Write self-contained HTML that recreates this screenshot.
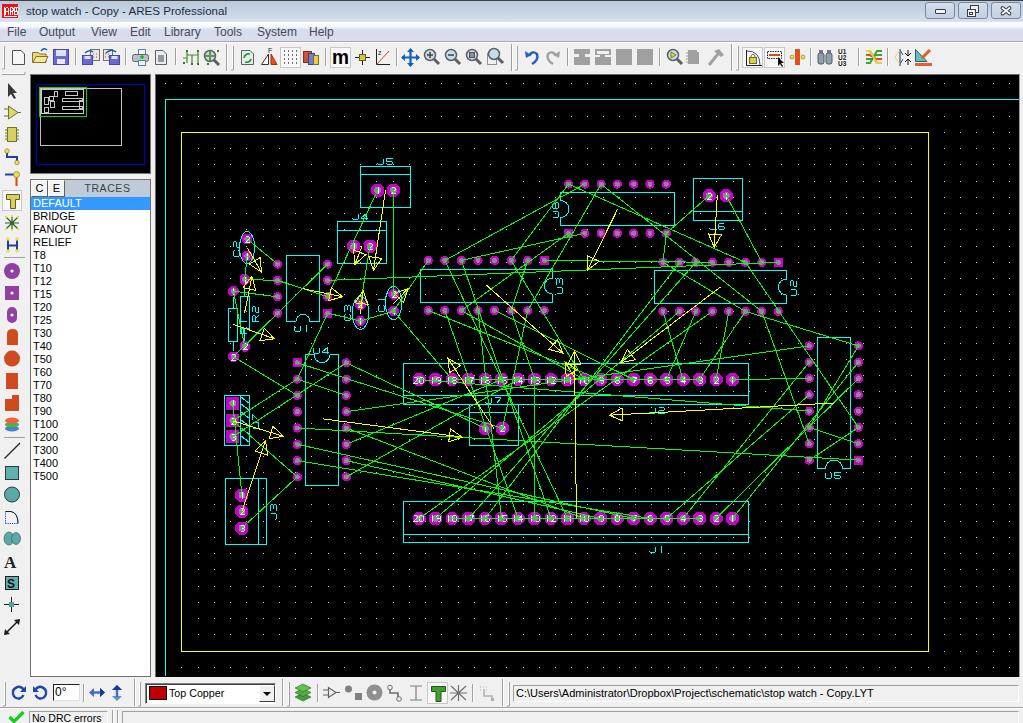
<!DOCTYPE html><html><head><meta charset="utf-8"><style>
*{margin:0;padding:0;box-sizing:border-box}
html,body{width:1023px;height:723px;overflow:hidden;background:#f0f0f0;font-family:"Liberation Sans",sans-serif;position:relative}
.a{position:absolute}
#title{left:0;top:0;width:1023px;height:22px;background:linear-gradient(#b9c9d9,#c6d4e2 45%,#d6e2ee);border-top:1px solid #404040}
#title .t{left:26px;top:3px;font-size:11.6px;color:#1e2b40;white-space:nowrap}
.wb{top:2px;height:17px;border:1px solid #7888a4;border-radius:3px;background:linear-gradient(#d4deea,#c2d0e0)}
#menu{left:0;top:22px;width:1023px;height:19px;background:linear-gradient(#ffffff 0,#f4f6fb 25%,#d8dcee 42%,#dadfef 100%)}
#menu span{position:absolute;top:3px;font-size:12px;color:#4a4a5a}
#list{left:30px;top:179px;width:121px;height:498px;background:#fff;border:1px solid #707070}
#list div.r{position:absolute;left:2px;font-size:11px;color:#000;height:13px;line-height:13px}
.sunk{border:1px solid;border-color:#a0a0a0 #fff #fff #a0a0a0}
</style></head><body>
<div id="title" class="a">
<svg class="a" style="left:2px;top:3px" width="17" height="15" shape-rendering="crispEdges"><rect x="0" y="0" width="16" height="14" fill="#f01010"/><path d="M2.5 3V12.5H15M3.5 10.5V4.5L4.5 3.5H5.5L6.5 4.5V10.5M3.5 7.5H6.5M8.5 10.5V3.5H10.5L11 4.5V6.5L10.5 7.5H8.5M10 7.5L11 10.5M13.5 3.5H12V10.5H13.5M12 7.5H13.5M15.5 3.5H14.5V7.5H15.5V10.5H14" fill="none" stroke="#fff" stroke-width="1"/></svg>
<div class="a t">stop watch - Copy - ARES Professional</div>
</div>
<div class="a wb" style="left:925px;width:30px"></div>
<div class="a wb" style="left:958px;width:30px"></div>
<div class="a wb" style="left:991px;width:30px"></div>
<div class="a" style="left:935px;top:9px;width:11px;height:5px;background:#f4f4f4;border:1px solid #3c3c4c;border-radius:1px"></div>
<div class="a" style="left:970px;top:5px;width:9px;height:8px;border:1px solid #3c3c4c;background:#f0f0f0"></div><div class="a" style="left:967px;top:9px;width:9px;height:8px;border:1px solid #3c3c4c;background:#f0f0f0"></div><div class="a" style="left:969px;top:12px;width:4px;height:3px;border:1px solid #3c3c4c"></div>
<svg class="a" style="left:998px;top:4px" width="16" height="14"><path d="M4.5 4L11.5 9.5M11.5 4L4.5 9.5" stroke="#3c3c4c" stroke-width="3.8" stroke-linecap="round"/><path d="M4.5 4L11.5 9.5M11.5 4L4.5 9.5" stroke="#f4f4f4" stroke-width="1.8" stroke-linecap="round"/></svg>
<div id="menu" class="a">
<span style="left:7px">File</span>
<span style="left:39px">Output</span>
<span style="left:91px">View</span>
<span style="left:130px">Edit</span>
<span style="left:164px">Library</span>
<span style="left:214px">Tools</span>
<span style="left:257px">System</span>
<span style="left:309px">Help</span>
</div>
<div class="a" style="left:0;top:41px;width:1023px;height:1px;background:#a8a8b0"></div><div class="a" style="left:0;top:42px;width:1023px;height:1px;background:#fff"></div>
<div class="a" style="left:30px;top:74px;width:121px;height:100px;background:#000;border:1px solid #777"></div>
<div class="a" style="left:36px;top:84px;width:109px;height:81px;border:1px solid #0000d0"></div>
<div class="a" style="left:40px;top:88px;width:82px;height:58px;border:1px solid #c0c0c0"></div>
<div class="a" style="left:39px;top:87px;width:48px;height:30px;border:1px solid #00e000"></div>
<svg class="a" style="left:40px;top:88px" width="46" height="28" shape-rendering="crispEdges"><g fill="none" stroke="#c8c8c8"><rect x="1.5" y="1.5" width="42" height="24"/><rect x="4.5" y="9.5" width="4" height="7"/><rect x="9.5" y="8.5" width="4" height="4"/><rect x="14.5" y="3.5" width="3" height="5"/><rect x="25.5" y="3.5" width="12" height="4"/><rect x="22.5" y="10.5" width="20" height="3"/><rect x="10.5" y="13.5" width="4" height="6"/><rect x="22.5" y="18.5" width="20" height="3"/><rect x="4.5" y="19.5" width="4" height="5"/><rect x="39.5" y="12.5" width="4" height="8"/></g></svg>
<div id="list" class="a">
<div class="a" style="left:0;top:0;width:17px;height:17px;background:#f4f4f4;border:1px solid;border-color:#fff #606060 #606060 #fff;font-size:11px;line-height:15px;text-align:center">C</div>
<div class="a" style="left:17px;top:0;width:17px;height:17px;background:#f4f4f4;border:1px solid;border-color:#fff #606060 #606060 #fff;font-size:11px;line-height:15px;text-align:center">E</div>
<div class="a" style="left:34px;top:0;width:85px;height:17px;background:#bfcbd9;font-size:10.5px;line-height:16px;text-align:center;color:#404040;letter-spacing:0.6px">TRACES</div>
<div class="a" style="left:0;top:17px;width:119px;height:13px;background:#3399ff"></div>
<div class="r" style="top:17px;color:#fff">DEFAULT</div>
<div class="r" style="top:30px;color:#000">BRIDGE</div>
<div class="r" style="top:43px;color:#000">FANOUT</div>
<div class="r" style="top:56px;color:#000">RELIEF</div>
<div class="r" style="top:69px;color:#000">T8</div>
<div class="r" style="top:82px;color:#000">T10</div>
<div class="r" style="top:95px;color:#000">T12</div>
<div class="r" style="top:108px;color:#000">T15</div>
<div class="r" style="top:121px;color:#000">T20</div>
<div class="r" style="top:134px;color:#000">T25</div>
<div class="r" style="top:147px;color:#000">T30</div>
<div class="r" style="top:160px;color:#000">T40</div>
<div class="r" style="top:173px;color:#000">T50</div>
<div class="r" style="top:186px;color:#000">T60</div>
<div class="r" style="top:199px;color:#000">T70</div>
<div class="r" style="top:212px;color:#000">T80</div>
<div class="r" style="top:225px;color:#000">T90</div>
<div class="r" style="top:238px;color:#000">T100</div>
<div class="r" style="top:251px;color:#000">T200</div>
<div class="r" style="top:264px;color:#000">T300</div>
<div class="r" style="top:277px;color:#000">T400</div>
<div class="r" style="top:290px;color:#000">T500</div>
</div>
<div class="a" style="left:155px;top:74px;width:865px;height:603px;background:#000;border-left:1px solid #6a6a6a;border-top:1px solid #6a6a6a;border-right:1px solid #a0a0a0"></div>
<svg class="a" style="left:0;top:0" width="1023" height="723" viewBox="0 0 1023 723" shape-rendering="crispEdges">
<path fill="#d0d0d0" d="M165 83h1v1h-1zm16 0h1v1h-1zm17 0h1v1h-1zm16 0h1v1h-1zm16 0h1v1h-1zm16 0h1v1h-1zm17 0h1v1h-1zm16 0h1v1h-1zm16 0h1v1h-1zm16 0h1v1h-1zm17 0h1v1h-1zm16 0h1v1h-1zm16 0h1v1h-1zm16 0h1v1h-1zm17 0h1v1h-1zm16 0h1v1h-1zm16 0h1v1h-1zm16 0h1v1h-1zm17 0h1v1h-1zm16 0h1v1h-1zm16 0h1v1h-1zm16 0h1v1h-1zm17 0h1v1h-1zm16 0h1v1h-1zm16 0h1v1h-1zm16 0h1v1h-1zm16 0h1v1h-1zm16 0h1v1h-1zm16 0h1v1h-1zm16 0h1v1h-1zm16 0h1v1h-1zm17 0h1v1h-1zm16 0h1v1h-1zm16 0h1v1h-1zm16 0h1v1h-1zm17 0h1v1h-1zm16 0h1v1h-1zm16 0h1v1h-1zm16 0h1v1h-1zm17 0h1v1h-1zm16 0h1v1h-1zm16 0h1v1h-1zm16 0h1v1h-1zm17 0h1v1h-1zm16 0h1v1h-1zm16 0h1v1h-1zm16 0h1v1h-1zm17 0h1v1h-1zm16 0h1v1h-1zm16 0h1v1h-1zm16 0h1v1h-1zm17 0h1v1h-1zm16 0h1v1h-1zM165 99h1v1h-1zm16 0h1v1h-1zm17 0h1v1h-1zm16 0h1v1h-1zm16 0h1v1h-1zm16 0h1v1h-1zm17 0h1v1h-1zm16 0h1v1h-1zm16 0h1v1h-1zm16 0h1v1h-1zm17 0h1v1h-1zm16 0h1v1h-1zm16 0h1v1h-1zm16 0h1v1h-1zm17 0h1v1h-1zm16 0h1v1h-1zm16 0h1v1h-1zm16 0h1v1h-1zm17 0h1v1h-1zm16 0h1v1h-1zm16 0h1v1h-1zm16 0h1v1h-1zm17 0h1v1h-1zm16 0h1v1h-1zm16 0h1v1h-1zm16 0h1v1h-1zm16 0h1v1h-1zm16 0h1v1h-1zm16 0h1v1h-1zm16 0h1v1h-1zm16 0h1v1h-1zm17 0h1v1h-1zm16 0h1v1h-1zm16 0h1v1h-1zm16 0h1v1h-1zm17 0h1v1h-1zm16 0h1v1h-1zm16 0h1v1h-1zm16 0h1v1h-1zm17 0h1v1h-1zm16 0h1v1h-1zm16 0h1v1h-1zm16 0h1v1h-1zm17 0h1v1h-1zm16 0h1v1h-1zm16 0h1v1h-1zm16 0h1v1h-1zm17 0h1v1h-1zm16 0h1v1h-1zm16 0h1v1h-1zm16 0h1v1h-1zm17 0h1v1h-1zm16 0h1v1h-1zM165 116h1v1h-1zm16 0h1v1h-1zm17 0h1v1h-1zm16 0h1v1h-1zm16 0h1v1h-1zm16 0h1v1h-1zm17 0h1v1h-1zm16 0h1v1h-1zm16 0h1v1h-1zm16 0h1v1h-1zm17 0h1v1h-1zm16 0h1v1h-1zm16 0h1v1h-1zm16 0h1v1h-1zm17 0h1v1h-1zm16 0h1v1h-1zm16 0h1v1h-1zm16 0h1v1h-1zm17 0h1v1h-1zm16 0h1v1h-1zm16 0h1v1h-1zm16 0h1v1h-1zm17 0h1v1h-1zm16 0h1v1h-1zm16 0h1v1h-1zm16 0h1v1h-1zm16 0h1v1h-1zm16 0h1v1h-1zm16 0h1v1h-1zm16 0h1v1h-1zm16 0h1v1h-1zm17 0h1v1h-1zm16 0h1v1h-1zm16 0h1v1h-1zm16 0h1v1h-1zm17 0h1v1h-1zm16 0h1v1h-1zm16 0h1v1h-1zm16 0h1v1h-1zm17 0h1v1h-1zm16 0h1v1h-1zm16 0h1v1h-1zm16 0h1v1h-1zm17 0h1v1h-1zm16 0h1v1h-1zm16 0h1v1h-1zm16 0h1v1h-1zm17 0h1v1h-1zm16 0h1v1h-1zm16 0h1v1h-1zm16 0h1v1h-1zm17 0h1v1h-1zm16 0h1v1h-1zM165 132h1v1h-1zm16 0h1v1h-1zm17 0h1v1h-1zm16 0h1v1h-1zm16 0h1v1h-1zm16 0h1v1h-1zm17 0h1v1h-1zm16 0h1v1h-1zm16 0h1v1h-1zm16 0h1v1h-1zm17 0h1v1h-1zm16 0h1v1h-1zm16 0h1v1h-1zm16 0h1v1h-1zm17 0h1v1h-1zm16 0h1v1h-1zm16 0h1v1h-1zm16 0h1v1h-1zm17 0h1v1h-1zm16 0h1v1h-1zm16 0h1v1h-1zm16 0h1v1h-1zm17 0h1v1h-1zm16 0h1v1h-1zm16 0h1v1h-1zm16 0h1v1h-1zm16 0h1v1h-1zm16 0h1v1h-1zm16 0h1v1h-1zm16 0h1v1h-1zm16 0h1v1h-1zm17 0h1v1h-1zm16 0h1v1h-1zm16 0h1v1h-1zm16 0h1v1h-1zm17 0h1v1h-1zm16 0h1v1h-1zm16 0h1v1h-1zm16 0h1v1h-1zm17 0h1v1h-1zm16 0h1v1h-1zm16 0h1v1h-1zm16 0h1v1h-1zm17 0h1v1h-1zm16 0h1v1h-1zm16 0h1v1h-1zm16 0h1v1h-1zm17 0h1v1h-1zm16 0h1v1h-1zm16 0h1v1h-1zm16 0h1v1h-1zm17 0h1v1h-1zm16 0h1v1h-1zM165 148h1v1h-1zm16 0h1v1h-1zm17 0h1v1h-1zm16 0h1v1h-1zm16 0h1v1h-1zm16 0h1v1h-1zm17 0h1v1h-1zm16 0h1v1h-1zm16 0h1v1h-1zm16 0h1v1h-1zm17 0h1v1h-1zm16 0h1v1h-1zm16 0h1v1h-1zm16 0h1v1h-1zm17 0h1v1h-1zm16 0h1v1h-1zm16 0h1v1h-1zm16 0h1v1h-1zm17 0h1v1h-1zm16 0h1v1h-1zm16 0h1v1h-1zm16 0h1v1h-1zm17 0h1v1h-1zm16 0h1v1h-1zm16 0h1v1h-1zm16 0h1v1h-1zm16 0h1v1h-1zm16 0h1v1h-1zm16 0h1v1h-1zm16 0h1v1h-1zm16 0h1v1h-1zm17 0h1v1h-1zm16 0h1v1h-1zm16 0h1v1h-1zm16 0h1v1h-1zm17 0h1v1h-1zm16 0h1v1h-1zm16 0h1v1h-1zm16 0h1v1h-1zm17 0h1v1h-1zm16 0h1v1h-1zm16 0h1v1h-1zm16 0h1v1h-1zm17 0h1v1h-1zm16 0h1v1h-1zm16 0h1v1h-1zm16 0h1v1h-1zm17 0h1v1h-1zm16 0h1v1h-1zm16 0h1v1h-1zm16 0h1v1h-1zm17 0h1v1h-1zm16 0h1v1h-1zM165 164h1v1h-1zm16 0h1v1h-1zm17 0h1v1h-1zm16 0h1v1h-1zm16 0h1v1h-1zm16 0h1v1h-1zm17 0h1v1h-1zm16 0h1v1h-1zm16 0h1v1h-1zm16 0h1v1h-1zm17 0h1v1h-1zm16 0h1v1h-1zm16 0h1v1h-1zm16 0h1v1h-1zm17 0h1v1h-1zm16 0h1v1h-1zm16 0h1v1h-1zm16 0h1v1h-1zm17 0h1v1h-1zm16 0h1v1h-1zm16 0h1v1h-1zm16 0h1v1h-1zm17 0h1v1h-1zm16 0h1v1h-1zm16 0h1v1h-1zm16 0h1v1h-1zm16 0h1v1h-1zm16 0h1v1h-1zm16 0h1v1h-1zm16 0h1v1h-1zm16 0h1v1h-1zm17 0h1v1h-1zm16 0h1v1h-1zm16 0h1v1h-1zm16 0h1v1h-1zm17 0h1v1h-1zm16 0h1v1h-1zm16 0h1v1h-1zm16 0h1v1h-1zm17 0h1v1h-1zm16 0h1v1h-1zm16 0h1v1h-1zm16 0h1v1h-1zm17 0h1v1h-1zm16 0h1v1h-1zm16 0h1v1h-1zm16 0h1v1h-1zm17 0h1v1h-1zm16 0h1v1h-1zm16 0h1v1h-1zm16 0h1v1h-1zm17 0h1v1h-1zm16 0h1v1h-1zM165 181h1v1h-1zm16 0h1v1h-1zm17 0h1v1h-1zm16 0h1v1h-1zm16 0h1v1h-1zm16 0h1v1h-1zm17 0h1v1h-1zm16 0h1v1h-1zm16 0h1v1h-1zm16 0h1v1h-1zm17 0h1v1h-1zm16 0h1v1h-1zm16 0h1v1h-1zm16 0h1v1h-1zm17 0h1v1h-1zm16 0h1v1h-1zm16 0h1v1h-1zm16 0h1v1h-1zm17 0h1v1h-1zm16 0h1v1h-1zm16 0h1v1h-1zm16 0h1v1h-1zm17 0h1v1h-1zm16 0h1v1h-1zm16 0h1v1h-1zm16 0h1v1h-1zm16 0h1v1h-1zm16 0h1v1h-1zm16 0h1v1h-1zm16 0h1v1h-1zm16 0h1v1h-1zm17 0h1v1h-1zm16 0h1v1h-1zm16 0h1v1h-1zm16 0h1v1h-1zm17 0h1v1h-1zm16 0h1v1h-1zm16 0h1v1h-1zm16 0h1v1h-1zm17 0h1v1h-1zm16 0h1v1h-1zm16 0h1v1h-1zm16 0h1v1h-1zm17 0h1v1h-1zm16 0h1v1h-1zm16 0h1v1h-1zm16 0h1v1h-1zm17 0h1v1h-1zm16 0h1v1h-1zm16 0h1v1h-1zm16 0h1v1h-1zm17 0h1v1h-1zm16 0h1v1h-1zM165 197h1v1h-1zm16 0h1v1h-1zm17 0h1v1h-1zm16 0h1v1h-1zm16 0h1v1h-1zm16 0h1v1h-1zm17 0h1v1h-1zm16 0h1v1h-1zm16 0h1v1h-1zm16 0h1v1h-1zm17 0h1v1h-1zm16 0h1v1h-1zm16 0h1v1h-1zm16 0h1v1h-1zm17 0h1v1h-1zm16 0h1v1h-1zm16 0h1v1h-1zm16 0h1v1h-1zm17 0h1v1h-1zm16 0h1v1h-1zm16 0h1v1h-1zm16 0h1v1h-1zm17 0h1v1h-1zm16 0h1v1h-1zm16 0h1v1h-1zm16 0h1v1h-1zm16 0h1v1h-1zm16 0h1v1h-1zm16 0h1v1h-1zm16 0h1v1h-1zm16 0h1v1h-1zm17 0h1v1h-1zm16 0h1v1h-1zm16 0h1v1h-1zm16 0h1v1h-1zm17 0h1v1h-1zm16 0h1v1h-1zm16 0h1v1h-1zm16 0h1v1h-1zm17 0h1v1h-1zm16 0h1v1h-1zm16 0h1v1h-1zm16 0h1v1h-1zm17 0h1v1h-1zm16 0h1v1h-1zm16 0h1v1h-1zm16 0h1v1h-1zm17 0h1v1h-1zm16 0h1v1h-1zm16 0h1v1h-1zm16 0h1v1h-1zm17 0h1v1h-1zm16 0h1v1h-1zM165 213h1v1h-1zm16 0h1v1h-1zm17 0h1v1h-1zm16 0h1v1h-1zm16 0h1v1h-1zm16 0h1v1h-1zm17 0h1v1h-1zm16 0h1v1h-1zm16 0h1v1h-1zm16 0h1v1h-1zm17 0h1v1h-1zm16 0h1v1h-1zm16 0h1v1h-1zm16 0h1v1h-1zm17 0h1v1h-1zm16 0h1v1h-1zm16 0h1v1h-1zm16 0h1v1h-1zm17 0h1v1h-1zm16 0h1v1h-1zm16 0h1v1h-1zm16 0h1v1h-1zm17 0h1v1h-1zm16 0h1v1h-1zm16 0h1v1h-1zm16 0h1v1h-1zm16 0h1v1h-1zm16 0h1v1h-1zm16 0h1v1h-1zm16 0h1v1h-1zm16 0h1v1h-1zm17 0h1v1h-1zm16 0h1v1h-1zm16 0h1v1h-1zm16 0h1v1h-1zm17 0h1v1h-1zm16 0h1v1h-1zm16 0h1v1h-1zm16 0h1v1h-1zm17 0h1v1h-1zm16 0h1v1h-1zm16 0h1v1h-1zm16 0h1v1h-1zm17 0h1v1h-1zm16 0h1v1h-1zm16 0h1v1h-1zm16 0h1v1h-1zm17 0h1v1h-1zm16 0h1v1h-1zm16 0h1v1h-1zm16 0h1v1h-1zm17 0h1v1h-1zm16 0h1v1h-1zM165 229h1v1h-1zm16 0h1v1h-1zm17 0h1v1h-1zm16 0h1v1h-1zm16 0h1v1h-1zm16 0h1v1h-1zm17 0h1v1h-1zm16 0h1v1h-1zm16 0h1v1h-1zm16 0h1v1h-1zm17 0h1v1h-1zm16 0h1v1h-1zm16 0h1v1h-1zm16 0h1v1h-1zm17 0h1v1h-1zm16 0h1v1h-1zm16 0h1v1h-1zm16 0h1v1h-1zm17 0h1v1h-1zm16 0h1v1h-1zm16 0h1v1h-1zm16 0h1v1h-1zm17 0h1v1h-1zm16 0h1v1h-1zm16 0h1v1h-1zm16 0h1v1h-1zm16 0h1v1h-1zm16 0h1v1h-1zm16 0h1v1h-1zm16 0h1v1h-1zm16 0h1v1h-1zm17 0h1v1h-1zm16 0h1v1h-1zm16 0h1v1h-1zm16 0h1v1h-1zm17 0h1v1h-1zm16 0h1v1h-1zm16 0h1v1h-1zm16 0h1v1h-1zm17 0h1v1h-1zm16 0h1v1h-1zm16 0h1v1h-1zm16 0h1v1h-1zm17 0h1v1h-1zm16 0h1v1h-1zm16 0h1v1h-1zm16 0h1v1h-1zm17 0h1v1h-1zm16 0h1v1h-1zm16 0h1v1h-1zm16 0h1v1h-1zm17 0h1v1h-1zm16 0h1v1h-1zM165 246h1v1h-1zm16 0h1v1h-1zm17 0h1v1h-1zm16 0h1v1h-1zm16 0h1v1h-1zm16 0h1v1h-1zm17 0h1v1h-1zm16 0h1v1h-1zm16 0h1v1h-1zm16 0h1v1h-1zm17 0h1v1h-1zm16 0h1v1h-1zm16 0h1v1h-1zm16 0h1v1h-1zm17 0h1v1h-1zm16 0h1v1h-1zm16 0h1v1h-1zm16 0h1v1h-1zm17 0h1v1h-1zm16 0h1v1h-1zm16 0h1v1h-1zm16 0h1v1h-1zm17 0h1v1h-1zm16 0h1v1h-1zm16 0h1v1h-1zm16 0h1v1h-1zm16 0h1v1h-1zm16 0h1v1h-1zm16 0h1v1h-1zm16 0h1v1h-1zm16 0h1v1h-1zm17 0h1v1h-1zm16 0h1v1h-1zm16 0h1v1h-1zm16 0h1v1h-1zm17 0h1v1h-1zm16 0h1v1h-1zm16 0h1v1h-1zm16 0h1v1h-1zm17 0h1v1h-1zm16 0h1v1h-1zm16 0h1v1h-1zm16 0h1v1h-1zm17 0h1v1h-1zm16 0h1v1h-1zm16 0h1v1h-1zm16 0h1v1h-1zm17 0h1v1h-1zm16 0h1v1h-1zm16 0h1v1h-1zm16 0h1v1h-1zm17 0h1v1h-1zm16 0h1v1h-1zM165 262h1v1h-1zm16 0h1v1h-1zm17 0h1v1h-1zm16 0h1v1h-1zm16 0h1v1h-1zm16 0h1v1h-1zm17 0h1v1h-1zm16 0h1v1h-1zm16 0h1v1h-1zm16 0h1v1h-1zm17 0h1v1h-1zm16 0h1v1h-1zm16 0h1v1h-1zm16 0h1v1h-1zm17 0h1v1h-1zm16 0h1v1h-1zm16 0h1v1h-1zm16 0h1v1h-1zm17 0h1v1h-1zm16 0h1v1h-1zm16 0h1v1h-1zm16 0h1v1h-1zm17 0h1v1h-1zm16 0h1v1h-1zm16 0h1v1h-1zm16 0h1v1h-1zm16 0h1v1h-1zm16 0h1v1h-1zm16 0h1v1h-1zm16 0h1v1h-1zm16 0h1v1h-1zm17 0h1v1h-1zm16 0h1v1h-1zm16 0h1v1h-1zm16 0h1v1h-1zm17 0h1v1h-1zm16 0h1v1h-1zm16 0h1v1h-1zm16 0h1v1h-1zm17 0h1v1h-1zm16 0h1v1h-1zm16 0h1v1h-1zm16 0h1v1h-1zm17 0h1v1h-1zm16 0h1v1h-1zm16 0h1v1h-1zm16 0h1v1h-1zm17 0h1v1h-1zm16 0h1v1h-1zm16 0h1v1h-1zm16 0h1v1h-1zm17 0h1v1h-1zm16 0h1v1h-1zM165 278h1v1h-1zm16 0h1v1h-1zm17 0h1v1h-1zm16 0h1v1h-1zm16 0h1v1h-1zm16 0h1v1h-1zm17 0h1v1h-1zm16 0h1v1h-1zm16 0h1v1h-1zm16 0h1v1h-1zm17 0h1v1h-1zm16 0h1v1h-1zm16 0h1v1h-1zm16 0h1v1h-1zm17 0h1v1h-1zm16 0h1v1h-1zm16 0h1v1h-1zm16 0h1v1h-1zm17 0h1v1h-1zm16 0h1v1h-1zm16 0h1v1h-1zm16 0h1v1h-1zm17 0h1v1h-1zm16 0h1v1h-1zm16 0h1v1h-1zm16 0h1v1h-1zm16 0h1v1h-1zm16 0h1v1h-1zm16 0h1v1h-1zm16 0h1v1h-1zm16 0h1v1h-1zm17 0h1v1h-1zm16 0h1v1h-1zm16 0h1v1h-1zm16 0h1v1h-1zm17 0h1v1h-1zm16 0h1v1h-1zm16 0h1v1h-1zm16 0h1v1h-1zm17 0h1v1h-1zm16 0h1v1h-1zm16 0h1v1h-1zm16 0h1v1h-1zm17 0h1v1h-1zm16 0h1v1h-1zm16 0h1v1h-1zm16 0h1v1h-1zm17 0h1v1h-1zm16 0h1v1h-1zm16 0h1v1h-1zm16 0h1v1h-1zm17 0h1v1h-1zm16 0h1v1h-1zM165 294h1v1h-1zm16 0h1v1h-1zm17 0h1v1h-1zm16 0h1v1h-1zm16 0h1v1h-1zm16 0h1v1h-1zm17 0h1v1h-1zm16 0h1v1h-1zm16 0h1v1h-1zm16 0h1v1h-1zm17 0h1v1h-1zm16 0h1v1h-1zm16 0h1v1h-1zm16 0h1v1h-1zm17 0h1v1h-1zm16 0h1v1h-1zm16 0h1v1h-1zm16 0h1v1h-1zm17 0h1v1h-1zm16 0h1v1h-1zm16 0h1v1h-1zm16 0h1v1h-1zm17 0h1v1h-1zm16 0h1v1h-1zm16 0h1v1h-1zm16 0h1v1h-1zm16 0h1v1h-1zm16 0h1v1h-1zm16 0h1v1h-1zm16 0h1v1h-1zm16 0h1v1h-1zm17 0h1v1h-1zm16 0h1v1h-1zm16 0h1v1h-1zm16 0h1v1h-1zm17 0h1v1h-1zm16 0h1v1h-1zm16 0h1v1h-1zm16 0h1v1h-1zm17 0h1v1h-1zm16 0h1v1h-1zm16 0h1v1h-1zm16 0h1v1h-1zm17 0h1v1h-1zm16 0h1v1h-1zm16 0h1v1h-1zm16 0h1v1h-1zm17 0h1v1h-1zm16 0h1v1h-1zm16 0h1v1h-1zm16 0h1v1h-1zm17 0h1v1h-1zm16 0h1v1h-1zM165 311h1v1h-1zm16 0h1v1h-1zm17 0h1v1h-1zm16 0h1v1h-1zm16 0h1v1h-1zm16 0h1v1h-1zm17 0h1v1h-1zm16 0h1v1h-1zm16 0h1v1h-1zm16 0h1v1h-1zm17 0h1v1h-1zm16 0h1v1h-1zm16 0h1v1h-1zm16 0h1v1h-1zm17 0h1v1h-1zm16 0h1v1h-1zm16 0h1v1h-1zm16 0h1v1h-1zm17 0h1v1h-1zm16 0h1v1h-1zm16 0h1v1h-1zm16 0h1v1h-1zm17 0h1v1h-1zm16 0h1v1h-1zm16 0h1v1h-1zm16 0h1v1h-1zm16 0h1v1h-1zm16 0h1v1h-1zm16 0h1v1h-1zm16 0h1v1h-1zm16 0h1v1h-1zm17 0h1v1h-1zm16 0h1v1h-1zm16 0h1v1h-1zm16 0h1v1h-1zm17 0h1v1h-1zm16 0h1v1h-1zm16 0h1v1h-1zm16 0h1v1h-1zm17 0h1v1h-1zm16 0h1v1h-1zm16 0h1v1h-1zm16 0h1v1h-1zm17 0h1v1h-1zm16 0h1v1h-1zm16 0h1v1h-1zm16 0h1v1h-1zm17 0h1v1h-1zm16 0h1v1h-1zm16 0h1v1h-1zm16 0h1v1h-1zm17 0h1v1h-1zm16 0h1v1h-1zM165 327h1v1h-1zm16 0h1v1h-1zm17 0h1v1h-1zm16 0h1v1h-1zm16 0h1v1h-1zm16 0h1v1h-1zm17 0h1v1h-1zm16 0h1v1h-1zm16 0h1v1h-1zm16 0h1v1h-1zm17 0h1v1h-1zm16 0h1v1h-1zm16 0h1v1h-1zm16 0h1v1h-1zm17 0h1v1h-1zm16 0h1v1h-1zm16 0h1v1h-1zm16 0h1v1h-1zm17 0h1v1h-1zm16 0h1v1h-1zm16 0h1v1h-1zm16 0h1v1h-1zm17 0h1v1h-1zm16 0h1v1h-1zm16 0h1v1h-1zm16 0h1v1h-1zm16 0h1v1h-1zm16 0h1v1h-1zm16 0h1v1h-1zm16 0h1v1h-1zm16 0h1v1h-1zm17 0h1v1h-1zm16 0h1v1h-1zm16 0h1v1h-1zm16 0h1v1h-1zm17 0h1v1h-1zm16 0h1v1h-1zm16 0h1v1h-1zm16 0h1v1h-1zm17 0h1v1h-1zm16 0h1v1h-1zm16 0h1v1h-1zm16 0h1v1h-1zm17 0h1v1h-1zm16 0h1v1h-1zm16 0h1v1h-1zm16 0h1v1h-1zm17 0h1v1h-1zm16 0h1v1h-1zm16 0h1v1h-1zm16 0h1v1h-1zm17 0h1v1h-1zm16 0h1v1h-1zM165 343h1v1h-1zm16 0h1v1h-1zm17 0h1v1h-1zm16 0h1v1h-1zm16 0h1v1h-1zm16 0h1v1h-1zm17 0h1v1h-1zm16 0h1v1h-1zm16 0h1v1h-1zm16 0h1v1h-1zm17 0h1v1h-1zm16 0h1v1h-1zm16 0h1v1h-1zm16 0h1v1h-1zm17 0h1v1h-1zm16 0h1v1h-1zm16 0h1v1h-1zm16 0h1v1h-1zm17 0h1v1h-1zm16 0h1v1h-1zm16 0h1v1h-1zm16 0h1v1h-1zm17 0h1v1h-1zm16 0h1v1h-1zm16 0h1v1h-1zm16 0h1v1h-1zm16 0h1v1h-1zm16 0h1v1h-1zm16 0h1v1h-1zm16 0h1v1h-1zm16 0h1v1h-1zm17 0h1v1h-1zm16 0h1v1h-1zm16 0h1v1h-1zm16 0h1v1h-1zm17 0h1v1h-1zm16 0h1v1h-1zm16 0h1v1h-1zm16 0h1v1h-1zm17 0h1v1h-1zm16 0h1v1h-1zm16 0h1v1h-1zm16 0h1v1h-1zm17 0h1v1h-1zm16 0h1v1h-1zm16 0h1v1h-1zm16 0h1v1h-1zm17 0h1v1h-1zm16 0h1v1h-1zm16 0h1v1h-1zm16 0h1v1h-1zm17 0h1v1h-1zm16 0h1v1h-1zM165 359h1v1h-1zm16 0h1v1h-1zm17 0h1v1h-1zm16 0h1v1h-1zm16 0h1v1h-1zm16 0h1v1h-1zm17 0h1v1h-1zm16 0h1v1h-1zm16 0h1v1h-1zm16 0h1v1h-1zm17 0h1v1h-1zm16 0h1v1h-1zm16 0h1v1h-1zm16 0h1v1h-1zm17 0h1v1h-1zm16 0h1v1h-1zm16 0h1v1h-1zm16 0h1v1h-1zm17 0h1v1h-1zm16 0h1v1h-1zm16 0h1v1h-1zm16 0h1v1h-1zm17 0h1v1h-1zm16 0h1v1h-1zm16 0h1v1h-1zm16 0h1v1h-1zm16 0h1v1h-1zm16 0h1v1h-1zm16 0h1v1h-1zm16 0h1v1h-1zm16 0h1v1h-1zm17 0h1v1h-1zm16 0h1v1h-1zm16 0h1v1h-1zm16 0h1v1h-1zm17 0h1v1h-1zm16 0h1v1h-1zm16 0h1v1h-1zm16 0h1v1h-1zm17 0h1v1h-1zm16 0h1v1h-1zm16 0h1v1h-1zm16 0h1v1h-1zm17 0h1v1h-1zm16 0h1v1h-1zm16 0h1v1h-1zm16 0h1v1h-1zm17 0h1v1h-1zm16 0h1v1h-1zm16 0h1v1h-1zm16 0h1v1h-1zm17 0h1v1h-1zm16 0h1v1h-1zM165 375h1v1h-1zm16 0h1v1h-1zm17 0h1v1h-1zm16 0h1v1h-1zm16 0h1v1h-1zm16 0h1v1h-1zm17 0h1v1h-1zm16 0h1v1h-1zm16 0h1v1h-1zm16 0h1v1h-1zm17 0h1v1h-1zm16 0h1v1h-1zm16 0h1v1h-1zm16 0h1v1h-1zm17 0h1v1h-1zm16 0h1v1h-1zm16 0h1v1h-1zm16 0h1v1h-1zm17 0h1v1h-1zm16 0h1v1h-1zm16 0h1v1h-1zm16 0h1v1h-1zm17 0h1v1h-1zm16 0h1v1h-1zm16 0h1v1h-1zm16 0h1v1h-1zm16 0h1v1h-1zm16 0h1v1h-1zm16 0h1v1h-1zm16 0h1v1h-1zm16 0h1v1h-1zm17 0h1v1h-1zm16 0h1v1h-1zm16 0h1v1h-1zm16 0h1v1h-1zm17 0h1v1h-1zm16 0h1v1h-1zm16 0h1v1h-1zm16 0h1v1h-1zm17 0h1v1h-1zm16 0h1v1h-1zm16 0h1v1h-1zm16 0h1v1h-1zm17 0h1v1h-1zm16 0h1v1h-1zm16 0h1v1h-1zm16 0h1v1h-1zm17 0h1v1h-1zm16 0h1v1h-1zm16 0h1v1h-1zm16 0h1v1h-1zm17 0h1v1h-1zm16 0h1v1h-1zM165 391h1v1h-1zm16 0h1v1h-1zm17 0h1v1h-1zm16 0h1v1h-1zm16 0h1v1h-1zm16 0h1v1h-1zm17 0h1v1h-1zm16 0h1v1h-1zm16 0h1v1h-1zm16 0h1v1h-1zm17 0h1v1h-1zm16 0h1v1h-1zm16 0h1v1h-1zm16 0h1v1h-1zm17 0h1v1h-1zm16 0h1v1h-1zm16 0h1v1h-1zm16 0h1v1h-1zm17 0h1v1h-1zm16 0h1v1h-1zm16 0h1v1h-1zm16 0h1v1h-1zm17 0h1v1h-1zm16 0h1v1h-1zm16 0h1v1h-1zm16 0h1v1h-1zm16 0h1v1h-1zm16 0h1v1h-1zm16 0h1v1h-1zm16 0h1v1h-1zm16 0h1v1h-1zm17 0h1v1h-1zm16 0h1v1h-1zm16 0h1v1h-1zm16 0h1v1h-1zm17 0h1v1h-1zm16 0h1v1h-1zm16 0h1v1h-1zm16 0h1v1h-1zm17 0h1v1h-1zm16 0h1v1h-1zm16 0h1v1h-1zm16 0h1v1h-1zm17 0h1v1h-1zm16 0h1v1h-1zm16 0h1v1h-1zm16 0h1v1h-1zm17 0h1v1h-1zm16 0h1v1h-1zm16 0h1v1h-1zm16 0h1v1h-1zm17 0h1v1h-1zm16 0h1v1h-1zM165 407h1v1h-1zm16 0h1v1h-1zm17 0h1v1h-1zm16 0h1v1h-1zm16 0h1v1h-1zm16 0h1v1h-1zm17 0h1v1h-1zm16 0h1v1h-1zm16 0h1v1h-1zm16 0h1v1h-1zm17 0h1v1h-1zm16 0h1v1h-1zm16 0h1v1h-1zm16 0h1v1h-1zm17 0h1v1h-1zm16 0h1v1h-1zm16 0h1v1h-1zm16 0h1v1h-1zm17 0h1v1h-1zm16 0h1v1h-1zm16 0h1v1h-1zm16 0h1v1h-1zm17 0h1v1h-1zm16 0h1v1h-1zm16 0h1v1h-1zm16 0h1v1h-1zm16 0h1v1h-1zm16 0h1v1h-1zm16 0h1v1h-1zm16 0h1v1h-1zm16 0h1v1h-1zm17 0h1v1h-1zm16 0h1v1h-1zm16 0h1v1h-1zm16 0h1v1h-1zm17 0h1v1h-1zm16 0h1v1h-1zm16 0h1v1h-1zm16 0h1v1h-1zm17 0h1v1h-1zm16 0h1v1h-1zm16 0h1v1h-1zm16 0h1v1h-1zm17 0h1v1h-1zm16 0h1v1h-1zm16 0h1v1h-1zm16 0h1v1h-1zm17 0h1v1h-1zm16 0h1v1h-1zm16 0h1v1h-1zm16 0h1v1h-1zm17 0h1v1h-1zm16 0h1v1h-1zM165 423h1v1h-1zm16 0h1v1h-1zm17 0h1v1h-1zm16 0h1v1h-1zm16 0h1v1h-1zm16 0h1v1h-1zm17 0h1v1h-1zm16 0h1v1h-1zm16 0h1v1h-1zm16 0h1v1h-1zm17 0h1v1h-1zm16 0h1v1h-1zm16 0h1v1h-1zm16 0h1v1h-1zm17 0h1v1h-1zm16 0h1v1h-1zm16 0h1v1h-1zm16 0h1v1h-1zm17 0h1v1h-1zm16 0h1v1h-1zm16 0h1v1h-1zm16 0h1v1h-1zm17 0h1v1h-1zm16 0h1v1h-1zm16 0h1v1h-1zm16 0h1v1h-1zm16 0h1v1h-1zm16 0h1v1h-1zm16 0h1v1h-1zm16 0h1v1h-1zm16 0h1v1h-1zm17 0h1v1h-1zm16 0h1v1h-1zm16 0h1v1h-1zm16 0h1v1h-1zm17 0h1v1h-1zm16 0h1v1h-1zm16 0h1v1h-1zm16 0h1v1h-1zm17 0h1v1h-1zm16 0h1v1h-1zm16 0h1v1h-1zm16 0h1v1h-1zm17 0h1v1h-1zm16 0h1v1h-1zm16 0h1v1h-1zm16 0h1v1h-1zm17 0h1v1h-1zm16 0h1v1h-1zm16 0h1v1h-1zm16 0h1v1h-1zm17 0h1v1h-1zm16 0h1v1h-1zM165 439h1v1h-1zm16 0h1v1h-1zm17 0h1v1h-1zm16 0h1v1h-1zm16 0h1v1h-1zm16 0h1v1h-1zm17 0h1v1h-1zm16 0h1v1h-1zm16 0h1v1h-1zm16 0h1v1h-1zm17 0h1v1h-1zm16 0h1v1h-1zm16 0h1v1h-1zm16 0h1v1h-1zm17 0h1v1h-1zm16 0h1v1h-1zm16 0h1v1h-1zm16 0h1v1h-1zm17 0h1v1h-1zm16 0h1v1h-1zm16 0h1v1h-1zm16 0h1v1h-1zm17 0h1v1h-1zm16 0h1v1h-1zm16 0h1v1h-1zm16 0h1v1h-1zm16 0h1v1h-1zm16 0h1v1h-1zm16 0h1v1h-1zm16 0h1v1h-1zm16 0h1v1h-1zm17 0h1v1h-1zm16 0h1v1h-1zm16 0h1v1h-1zm16 0h1v1h-1zm17 0h1v1h-1zm16 0h1v1h-1zm16 0h1v1h-1zm16 0h1v1h-1zm17 0h1v1h-1zm16 0h1v1h-1zm16 0h1v1h-1zm16 0h1v1h-1zm17 0h1v1h-1zm16 0h1v1h-1zm16 0h1v1h-1zm16 0h1v1h-1zm17 0h1v1h-1zm16 0h1v1h-1zm16 0h1v1h-1zm16 0h1v1h-1zm17 0h1v1h-1zm16 0h1v1h-1zM165 456h1v1h-1zm16 0h1v1h-1zm17 0h1v1h-1zm16 0h1v1h-1zm16 0h1v1h-1zm16 0h1v1h-1zm17 0h1v1h-1zm16 0h1v1h-1zm16 0h1v1h-1zm16 0h1v1h-1zm17 0h1v1h-1zm16 0h1v1h-1zm16 0h1v1h-1zm16 0h1v1h-1zm17 0h1v1h-1zm16 0h1v1h-1zm16 0h1v1h-1zm16 0h1v1h-1zm17 0h1v1h-1zm16 0h1v1h-1zm16 0h1v1h-1zm16 0h1v1h-1zm17 0h1v1h-1zm16 0h1v1h-1zm16 0h1v1h-1zm16 0h1v1h-1zm16 0h1v1h-1zm16 0h1v1h-1zm16 0h1v1h-1zm16 0h1v1h-1zm16 0h1v1h-1zm17 0h1v1h-1zm16 0h1v1h-1zm16 0h1v1h-1zm16 0h1v1h-1zm17 0h1v1h-1zm16 0h1v1h-1zm16 0h1v1h-1zm16 0h1v1h-1zm17 0h1v1h-1zm16 0h1v1h-1zm16 0h1v1h-1zm16 0h1v1h-1zm17 0h1v1h-1zm16 0h1v1h-1zm16 0h1v1h-1zm16 0h1v1h-1zm17 0h1v1h-1zm16 0h1v1h-1zm16 0h1v1h-1zm16 0h1v1h-1zm17 0h1v1h-1zm16 0h1v1h-1zM165 472h1v1h-1zm16 0h1v1h-1zm17 0h1v1h-1zm16 0h1v1h-1zm16 0h1v1h-1zm16 0h1v1h-1zm17 0h1v1h-1zm16 0h1v1h-1zm16 0h1v1h-1zm16 0h1v1h-1zm17 0h1v1h-1zm16 0h1v1h-1zm16 0h1v1h-1zm16 0h1v1h-1zm17 0h1v1h-1zm16 0h1v1h-1zm16 0h1v1h-1zm16 0h1v1h-1zm17 0h1v1h-1zm16 0h1v1h-1zm16 0h1v1h-1zm16 0h1v1h-1zm17 0h1v1h-1zm16 0h1v1h-1zm16 0h1v1h-1zm16 0h1v1h-1zm16 0h1v1h-1zm16 0h1v1h-1zm16 0h1v1h-1zm16 0h1v1h-1zm16 0h1v1h-1zm17 0h1v1h-1zm16 0h1v1h-1zm16 0h1v1h-1zm16 0h1v1h-1zm17 0h1v1h-1zm16 0h1v1h-1zm16 0h1v1h-1zm16 0h1v1h-1zm17 0h1v1h-1zm16 0h1v1h-1zm16 0h1v1h-1zm16 0h1v1h-1zm17 0h1v1h-1zm16 0h1v1h-1zm16 0h1v1h-1zm16 0h1v1h-1zm17 0h1v1h-1zm16 0h1v1h-1zm16 0h1v1h-1zm16 0h1v1h-1zm17 0h1v1h-1zm16 0h1v1h-1zM165 488h1v1h-1zm16 0h1v1h-1zm17 0h1v1h-1zm16 0h1v1h-1zm16 0h1v1h-1zm16 0h1v1h-1zm17 0h1v1h-1zm16 0h1v1h-1zm16 0h1v1h-1zm16 0h1v1h-1zm17 0h1v1h-1zm16 0h1v1h-1zm16 0h1v1h-1zm16 0h1v1h-1zm17 0h1v1h-1zm16 0h1v1h-1zm16 0h1v1h-1zm16 0h1v1h-1zm17 0h1v1h-1zm16 0h1v1h-1zm16 0h1v1h-1zm16 0h1v1h-1zm17 0h1v1h-1zm16 0h1v1h-1zm16 0h1v1h-1zm16 0h1v1h-1zm16 0h1v1h-1zm16 0h1v1h-1zm16 0h1v1h-1zm16 0h1v1h-1zm16 0h1v1h-1zm17 0h1v1h-1zm16 0h1v1h-1zm16 0h1v1h-1zm16 0h1v1h-1zm17 0h1v1h-1zm16 0h1v1h-1zm16 0h1v1h-1zm16 0h1v1h-1zm17 0h1v1h-1zm16 0h1v1h-1zm16 0h1v1h-1zm16 0h1v1h-1zm17 0h1v1h-1zm16 0h1v1h-1zm16 0h1v1h-1zm16 0h1v1h-1zm17 0h1v1h-1zm16 0h1v1h-1zm16 0h1v1h-1zm16 0h1v1h-1zm17 0h1v1h-1zm16 0h1v1h-1zM165 504h1v1h-1zm16 0h1v1h-1zm17 0h1v1h-1zm16 0h1v1h-1zm16 0h1v1h-1zm16 0h1v1h-1zm17 0h1v1h-1zm16 0h1v1h-1zm16 0h1v1h-1zm16 0h1v1h-1zm17 0h1v1h-1zm16 0h1v1h-1zm16 0h1v1h-1zm16 0h1v1h-1zm17 0h1v1h-1zm16 0h1v1h-1zm16 0h1v1h-1zm16 0h1v1h-1zm17 0h1v1h-1zm16 0h1v1h-1zm16 0h1v1h-1zm16 0h1v1h-1zm17 0h1v1h-1zm16 0h1v1h-1zm16 0h1v1h-1zm16 0h1v1h-1zm16 0h1v1h-1zm16 0h1v1h-1zm16 0h1v1h-1zm16 0h1v1h-1zm16 0h1v1h-1zm17 0h1v1h-1zm16 0h1v1h-1zm16 0h1v1h-1zm16 0h1v1h-1zm17 0h1v1h-1zm16 0h1v1h-1zm16 0h1v1h-1zm16 0h1v1h-1zm17 0h1v1h-1zm16 0h1v1h-1zm16 0h1v1h-1zm16 0h1v1h-1zm17 0h1v1h-1zm16 0h1v1h-1zm16 0h1v1h-1zm16 0h1v1h-1zm17 0h1v1h-1zm16 0h1v1h-1zm16 0h1v1h-1zm16 0h1v1h-1zm17 0h1v1h-1zm16 0h1v1h-1zM165 521h1v1h-1zm16 0h1v1h-1zm17 0h1v1h-1zm16 0h1v1h-1zm16 0h1v1h-1zm16 0h1v1h-1zm17 0h1v1h-1zm16 0h1v1h-1zm16 0h1v1h-1zm16 0h1v1h-1zm17 0h1v1h-1zm16 0h1v1h-1zm16 0h1v1h-1zm16 0h1v1h-1zm17 0h1v1h-1zm16 0h1v1h-1zm16 0h1v1h-1zm16 0h1v1h-1zm17 0h1v1h-1zm16 0h1v1h-1zm16 0h1v1h-1zm16 0h1v1h-1zm17 0h1v1h-1zm16 0h1v1h-1zm16 0h1v1h-1zm16 0h1v1h-1zm16 0h1v1h-1zm16 0h1v1h-1zm16 0h1v1h-1zm16 0h1v1h-1zm16 0h1v1h-1zm17 0h1v1h-1zm16 0h1v1h-1zm16 0h1v1h-1zm16 0h1v1h-1zm17 0h1v1h-1zm16 0h1v1h-1zm16 0h1v1h-1zm16 0h1v1h-1zm17 0h1v1h-1zm16 0h1v1h-1zm16 0h1v1h-1zm16 0h1v1h-1zm17 0h1v1h-1zm16 0h1v1h-1zm16 0h1v1h-1zm16 0h1v1h-1zm17 0h1v1h-1zm16 0h1v1h-1zm16 0h1v1h-1zm16 0h1v1h-1zm17 0h1v1h-1zm16 0h1v1h-1zM165 537h1v1h-1zm16 0h1v1h-1zm17 0h1v1h-1zm16 0h1v1h-1zm16 0h1v1h-1zm16 0h1v1h-1zm17 0h1v1h-1zm16 0h1v1h-1zm16 0h1v1h-1zm16 0h1v1h-1zm17 0h1v1h-1zm16 0h1v1h-1zm16 0h1v1h-1zm16 0h1v1h-1zm17 0h1v1h-1zm16 0h1v1h-1zm16 0h1v1h-1zm16 0h1v1h-1zm17 0h1v1h-1zm16 0h1v1h-1zm16 0h1v1h-1zm16 0h1v1h-1zm17 0h1v1h-1zm16 0h1v1h-1zm16 0h1v1h-1zm16 0h1v1h-1zm16 0h1v1h-1zm16 0h1v1h-1zm16 0h1v1h-1zm16 0h1v1h-1zm16 0h1v1h-1zm17 0h1v1h-1zm16 0h1v1h-1zm16 0h1v1h-1zm16 0h1v1h-1zm17 0h1v1h-1zm16 0h1v1h-1zm16 0h1v1h-1zm16 0h1v1h-1zm17 0h1v1h-1zm16 0h1v1h-1zm16 0h1v1h-1zm16 0h1v1h-1zm17 0h1v1h-1zm16 0h1v1h-1zm16 0h1v1h-1zm16 0h1v1h-1zm17 0h1v1h-1zm16 0h1v1h-1zm16 0h1v1h-1zm16 0h1v1h-1zm17 0h1v1h-1zm16 0h1v1h-1zM165 553h1v1h-1zm16 0h1v1h-1zm17 0h1v1h-1zm16 0h1v1h-1zm16 0h1v1h-1zm16 0h1v1h-1zm17 0h1v1h-1zm16 0h1v1h-1zm16 0h1v1h-1zm16 0h1v1h-1zm17 0h1v1h-1zm16 0h1v1h-1zm16 0h1v1h-1zm16 0h1v1h-1zm17 0h1v1h-1zm16 0h1v1h-1zm16 0h1v1h-1zm16 0h1v1h-1zm17 0h1v1h-1zm16 0h1v1h-1zm16 0h1v1h-1zm16 0h1v1h-1zm17 0h1v1h-1zm16 0h1v1h-1zm16 0h1v1h-1zm16 0h1v1h-1zm16 0h1v1h-1zm16 0h1v1h-1zm16 0h1v1h-1zm16 0h1v1h-1zm16 0h1v1h-1zm17 0h1v1h-1zm16 0h1v1h-1zm16 0h1v1h-1zm16 0h1v1h-1zm17 0h1v1h-1zm16 0h1v1h-1zm16 0h1v1h-1zm16 0h1v1h-1zm17 0h1v1h-1zm16 0h1v1h-1zm16 0h1v1h-1zm16 0h1v1h-1zm17 0h1v1h-1zm16 0h1v1h-1zm16 0h1v1h-1zm16 0h1v1h-1zm17 0h1v1h-1zm16 0h1v1h-1zm16 0h1v1h-1zm16 0h1v1h-1zm17 0h1v1h-1zm16 0h1v1h-1zM165 569h1v1h-1zm16 0h1v1h-1zm17 0h1v1h-1zm16 0h1v1h-1zm16 0h1v1h-1zm16 0h1v1h-1zm17 0h1v1h-1zm16 0h1v1h-1zm16 0h1v1h-1zm16 0h1v1h-1zm17 0h1v1h-1zm16 0h1v1h-1zm16 0h1v1h-1zm16 0h1v1h-1zm17 0h1v1h-1zm16 0h1v1h-1zm16 0h1v1h-1zm16 0h1v1h-1zm17 0h1v1h-1zm16 0h1v1h-1zm16 0h1v1h-1zm16 0h1v1h-1zm17 0h1v1h-1zm16 0h1v1h-1zm16 0h1v1h-1zm16 0h1v1h-1zm16 0h1v1h-1zm16 0h1v1h-1zm16 0h1v1h-1zm16 0h1v1h-1zm16 0h1v1h-1zm17 0h1v1h-1zm16 0h1v1h-1zm16 0h1v1h-1zm16 0h1v1h-1zm17 0h1v1h-1zm16 0h1v1h-1zm16 0h1v1h-1zm16 0h1v1h-1zm17 0h1v1h-1zm16 0h1v1h-1zm16 0h1v1h-1zm16 0h1v1h-1zm17 0h1v1h-1zm16 0h1v1h-1zm16 0h1v1h-1zm16 0h1v1h-1zm17 0h1v1h-1zm16 0h1v1h-1zm16 0h1v1h-1zm16 0h1v1h-1zm17 0h1v1h-1zm16 0h1v1h-1zM165 586h1v1h-1zm16 0h1v1h-1zm17 0h1v1h-1zm16 0h1v1h-1zm16 0h1v1h-1zm16 0h1v1h-1zm17 0h1v1h-1zm16 0h1v1h-1zm16 0h1v1h-1zm16 0h1v1h-1zm17 0h1v1h-1zm16 0h1v1h-1zm16 0h1v1h-1zm16 0h1v1h-1zm17 0h1v1h-1zm16 0h1v1h-1zm16 0h1v1h-1zm16 0h1v1h-1zm17 0h1v1h-1zm16 0h1v1h-1zm16 0h1v1h-1zm16 0h1v1h-1zm17 0h1v1h-1zm16 0h1v1h-1zm16 0h1v1h-1zm16 0h1v1h-1zm16 0h1v1h-1zm16 0h1v1h-1zm16 0h1v1h-1zm16 0h1v1h-1zm16 0h1v1h-1zm17 0h1v1h-1zm16 0h1v1h-1zm16 0h1v1h-1zm16 0h1v1h-1zm17 0h1v1h-1zm16 0h1v1h-1zm16 0h1v1h-1zm16 0h1v1h-1zm17 0h1v1h-1zm16 0h1v1h-1zm16 0h1v1h-1zm16 0h1v1h-1zm17 0h1v1h-1zm16 0h1v1h-1zm16 0h1v1h-1zm16 0h1v1h-1zm17 0h1v1h-1zm16 0h1v1h-1zm16 0h1v1h-1zm16 0h1v1h-1zm17 0h1v1h-1zm16 0h1v1h-1zM165 602h1v1h-1zm16 0h1v1h-1zm17 0h1v1h-1zm16 0h1v1h-1zm16 0h1v1h-1zm16 0h1v1h-1zm17 0h1v1h-1zm16 0h1v1h-1zm16 0h1v1h-1zm16 0h1v1h-1zm17 0h1v1h-1zm16 0h1v1h-1zm16 0h1v1h-1zm16 0h1v1h-1zm17 0h1v1h-1zm16 0h1v1h-1zm16 0h1v1h-1zm16 0h1v1h-1zm17 0h1v1h-1zm16 0h1v1h-1zm16 0h1v1h-1zm16 0h1v1h-1zm17 0h1v1h-1zm16 0h1v1h-1zm16 0h1v1h-1zm16 0h1v1h-1zm16 0h1v1h-1zm16 0h1v1h-1zm16 0h1v1h-1zm16 0h1v1h-1zm16 0h1v1h-1zm17 0h1v1h-1zm16 0h1v1h-1zm16 0h1v1h-1zm16 0h1v1h-1zm17 0h1v1h-1zm16 0h1v1h-1zm16 0h1v1h-1zm16 0h1v1h-1zm17 0h1v1h-1zm16 0h1v1h-1zm16 0h1v1h-1zm16 0h1v1h-1zm17 0h1v1h-1zm16 0h1v1h-1zm16 0h1v1h-1zm16 0h1v1h-1zm17 0h1v1h-1zm16 0h1v1h-1zm16 0h1v1h-1zm16 0h1v1h-1zm17 0h1v1h-1zm16 0h1v1h-1zM165 618h1v1h-1zm16 0h1v1h-1zm17 0h1v1h-1zm16 0h1v1h-1zm16 0h1v1h-1zm16 0h1v1h-1zm17 0h1v1h-1zm16 0h1v1h-1zm16 0h1v1h-1zm16 0h1v1h-1zm17 0h1v1h-1zm16 0h1v1h-1zm16 0h1v1h-1zm16 0h1v1h-1zm17 0h1v1h-1zm16 0h1v1h-1zm16 0h1v1h-1zm16 0h1v1h-1zm17 0h1v1h-1zm16 0h1v1h-1zm16 0h1v1h-1zm16 0h1v1h-1zm17 0h1v1h-1zm16 0h1v1h-1zm16 0h1v1h-1zm16 0h1v1h-1zm16 0h1v1h-1zm16 0h1v1h-1zm16 0h1v1h-1zm16 0h1v1h-1zm16 0h1v1h-1zm17 0h1v1h-1zm16 0h1v1h-1zm16 0h1v1h-1zm16 0h1v1h-1zm17 0h1v1h-1zm16 0h1v1h-1zm16 0h1v1h-1zm16 0h1v1h-1zm17 0h1v1h-1zm16 0h1v1h-1zm16 0h1v1h-1zm16 0h1v1h-1zm17 0h1v1h-1zm16 0h1v1h-1zm16 0h1v1h-1zm16 0h1v1h-1zm17 0h1v1h-1zm16 0h1v1h-1zm16 0h1v1h-1zm16 0h1v1h-1zm17 0h1v1h-1zm16 0h1v1h-1zM165 634h1v1h-1zm16 0h1v1h-1zm17 0h1v1h-1zm16 0h1v1h-1zm16 0h1v1h-1zm16 0h1v1h-1zm17 0h1v1h-1zm16 0h1v1h-1zm16 0h1v1h-1zm16 0h1v1h-1zm17 0h1v1h-1zm16 0h1v1h-1zm16 0h1v1h-1zm16 0h1v1h-1zm17 0h1v1h-1zm16 0h1v1h-1zm16 0h1v1h-1zm16 0h1v1h-1zm17 0h1v1h-1zm16 0h1v1h-1zm16 0h1v1h-1zm16 0h1v1h-1zm17 0h1v1h-1zm16 0h1v1h-1zm16 0h1v1h-1zm16 0h1v1h-1zm16 0h1v1h-1zm16 0h1v1h-1zm16 0h1v1h-1zm16 0h1v1h-1zm16 0h1v1h-1zm17 0h1v1h-1zm16 0h1v1h-1zm16 0h1v1h-1zm16 0h1v1h-1zm17 0h1v1h-1zm16 0h1v1h-1zm16 0h1v1h-1zm16 0h1v1h-1zm17 0h1v1h-1zm16 0h1v1h-1zm16 0h1v1h-1zm16 0h1v1h-1zm17 0h1v1h-1zm16 0h1v1h-1zm16 0h1v1h-1zm16 0h1v1h-1zm17 0h1v1h-1zm16 0h1v1h-1zm16 0h1v1h-1zm16 0h1v1h-1zm17 0h1v1h-1zm16 0h1v1h-1zM165 651h1v1h-1zm16 0h1v1h-1zm17 0h1v1h-1zm16 0h1v1h-1zm16 0h1v1h-1zm16 0h1v1h-1zm17 0h1v1h-1zm16 0h1v1h-1zm16 0h1v1h-1zm16 0h1v1h-1zm17 0h1v1h-1zm16 0h1v1h-1zm16 0h1v1h-1zm16 0h1v1h-1zm17 0h1v1h-1zm16 0h1v1h-1zm16 0h1v1h-1zm16 0h1v1h-1zm17 0h1v1h-1zm16 0h1v1h-1zm16 0h1v1h-1zm16 0h1v1h-1zm17 0h1v1h-1zm16 0h1v1h-1zm16 0h1v1h-1zm16 0h1v1h-1zm16 0h1v1h-1zm16 0h1v1h-1zm16 0h1v1h-1zm16 0h1v1h-1zm16 0h1v1h-1zm17 0h1v1h-1zm16 0h1v1h-1zm16 0h1v1h-1zm16 0h1v1h-1zm17 0h1v1h-1zm16 0h1v1h-1zm16 0h1v1h-1zm16 0h1v1h-1zm17 0h1v1h-1zm16 0h1v1h-1zm16 0h1v1h-1zm16 0h1v1h-1zm17 0h1v1h-1zm16 0h1v1h-1zm16 0h1v1h-1zm16 0h1v1h-1zm17 0h1v1h-1zm16 0h1v1h-1zm16 0h1v1h-1zm16 0h1v1h-1zm17 0h1v1h-1zm16 0h1v1h-1zM165 667h1v1h-1zm16 0h1v1h-1zm17 0h1v1h-1zm16 0h1v1h-1zm16 0h1v1h-1zm16 0h1v1h-1zm17 0h1v1h-1zm16 0h1v1h-1zm16 0h1v1h-1zm16 0h1v1h-1zm17 0h1v1h-1zm16 0h1v1h-1zm16 0h1v1h-1zm16 0h1v1h-1zm17 0h1v1h-1zm16 0h1v1h-1zm16 0h1v1h-1zm16 0h1v1h-1zm17 0h1v1h-1zm16 0h1v1h-1zm16 0h1v1h-1zm16 0h1v1h-1zm17 0h1v1h-1zm16 0h1v1h-1zm16 0h1v1h-1zm16 0h1v1h-1zm16 0h1v1h-1zm16 0h1v1h-1zm16 0h1v1h-1zm16 0h1v1h-1zm16 0h1v1h-1zm17 0h1v1h-1zm16 0h1v1h-1zm16 0h1v1h-1zm16 0h1v1h-1zm17 0h1v1h-1zm16 0h1v1h-1zm16 0h1v1h-1zm16 0h1v1h-1zm17 0h1v1h-1zm16 0h1v1h-1zm16 0h1v1h-1zm16 0h1v1h-1zm17 0h1v1h-1zm16 0h1v1h-1zm16 0h1v1h-1zm16 0h1v1h-1zm17 0h1v1h-1zm16 0h1v1h-1zm16 0h1v1h-1zm16 0h1v1h-1zm17 0h1v1h-1zm16 0h1v1h-1z"/>
<path fill="none" stroke="#00ffff" stroke-width="1" d="M1019 99.5H165.5V676"/>
<path fill="none" stroke="#ffff00" stroke-width="1" d="M181.5 132.5H928.5V651.5H181.5Z"/>
<g fill="none" stroke="#00ffff" stroke-width="1">
<rect x="360.5" y="166.5" width="50.0" height="41.0"/>
<path d="M360.5 174.5H410.5"/>
<rect x="337.5" y="221.5" width="49.0" height="42.0"/>
<path d="M337.5 230.5H386.5"/>
<ellipse cx="247.1" cy="247.5" rx="7.5" ry="16"/>
<ellipse cx="360.5" cy="312.8" rx="8.3" ry="16.5"/>
<ellipse cx="393.6" cy="303" rx="8.2" ry="16.6"/>
<rect x="240.5" y="296.5" width="9.0" height="32.0"/>
<path d="M244.5 285V296.5"/>
<path d="M244.5 328.5V341"/>
<rect x="228.5" y="308.5" width="9.0" height="33.0"/>
<path d="M233.5 297V308.5"/>
<path d="M233.5 341.5V351"/>
<path d="M286.5 255.5H319.5V321.5H310A7 7 0 0 0 296 321.5H286.5Z"/>
<path d="M560.5 192.5H674.5V225.5H560.5V217.5A8.5 8.5 0 0 0 560.5 200.5Z"/>
<rect x="693.5" y="178.5" width="49.0" height="42.0"/>
<path d="M693.5 211.5H742.5"/>
<path d="M420.5 269.5H552.5V278A8 8 0 0 0 552.5 294V302.5H420.5Z"/>
<path d="M654.5 270.5H786.5V279A8 8 0 0 0 786.5 295V303.5H654.5Z"/>
<path d="M305.5 354.5H314A8 8 0 0 0 330 354.5H338.5V485.5H305.5Z"/>
<rect x="224.5" y="395.5" width="25.0" height="50.0"/>
<path d="M240.5 395.5V445.5"/>
<path d="M241 397L249 403"/>
<path d="M241 404L249 410"/>
<path d="M241 412L249 418"/>
<path d="M241 420L249 426"/>
<path d="M241 428L249 434"/>
<path d="M241 436L249 442"/>
<rect x="225.5" y="478.5" width="41.0" height="66.0"/>
<path d="M258.5 478.5V544.5"/>
<rect x="469.5" y="404.5" width="49.0" height="41.0"/>
<path d="M469.5 412.5H518.5"/>
<rect x="403.5" y="363.5" width="345.0" height="41.0"/>
<path d="M403.5 395.5H748.5"/>
<rect x="403.5" y="501.5" width="345.0" height="41.0"/>
<path d="M403.5 534.5H748.5"/>
<path d="M817.5 337.5H850.5V468.5H842.5A8.5 8.5 0 0 0 825.5 468.5H817.5Z"/>
</g>
<g fill="none" stroke="#00ffff" stroke-width="1">
<path transform="translate(377 158)" d="M6.5 0.5V5.5L5.5 6.5H1.5L0.5 5.5V4.5M15.5 0.5H9.5V3.5H14.5L15.5 4.5V5.5L14.5 6.5H10.5L9.5 5.5"/>
<path transform="translate(352 213)" d="M6.5 0.5V5.5L5.5 6.5H1.5L0.5 5.5V4.5M14.5 6.5V0.5L9.5 4.5V5.5H15.5"/>
<path transform="translate(294 325)" d="M0.5 0.5V5.5L1.5 6.5H5.5L6.5 5.5V0.5M11.5 1.5L12.5 0.5V6.5"/>
<path transform="translate(709 223)" d="M6.5 0.5V5.5L5.5 6.5H1.5L0.5 5.5V4.5M14.5 0.5H10.5L9.5 1.5V5.5L10.5 6.5H14.5L15.5 5.5V4.5L14.5 3.5H9.5"/>
<path transform="translate(313 347)" d="M0.5 0.5V5.5L1.5 6.5H5.5L6.5 5.5V0.5M14.5 6.5V0.5L9.5 4.5V5.5H15.5"/>
<path transform="translate(485 397)" d="M6.5 0.5V5.5L5.5 6.5H1.5L0.5 5.5V4.5M9.5 0.5H15.5V1.5L11.5 6.5"/>
<path transform="translate(649 407)" d="M6.5 0.5V5.5L5.5 6.5H1.5L0.5 5.5V4.5M9.5 1.5L10.5 0.5H14.5L15.5 1.5V2.5L14.5 3.5H10.5L9.5 4.5V6.5H15.5"/>
<path transform="translate(649 546)" d="M6.5 0.5V5.5L5.5 6.5H1.5L0.5 5.5V4.5M11.5 1.5L12.5 0.5V6.5"/>
<path transform="translate(825 472)" d="M0.5 0.5V5.5L1.5 6.5H5.5L6.5 5.5V0.5M15.5 0.5H9.5V3.5H14.5L15.5 4.5V5.5L14.5 6.5H10.5L9.5 5.5"/>
<path transform="translate(233 257) rotate(-90)" d="M6.5 1.5L5.5 0.5H1.5L0.5 1.5V5.5L1.5 6.5H5.5L6.5 5.5M9.5 1.5L10.5 0.5H14.5L15.5 1.5V2.5L14.5 3.5H10.5L9.5 4.5V6.5H15.5"/>
<path transform="translate(252 322) rotate(-90)" d="M0.5 6.5V0.5H5.5L6.5 1.5V2.5L5.5 3.5H0.5M3.5 3.5L6.5 6.5M9.5 1.5L10.5 0.5H14.5L15.5 1.5V2.5L14.5 3.5H10.5L9.5 4.5V6.5H15.5"/>
<path transform="translate(240 334) rotate(-90)" d="M0.5 6.5V0.5H5.5L6.5 1.5V2.5L5.5 3.5H0.5M3.5 3.5L6.5 6.5M11.5 1.5L12.5 0.5V6.5"/>
<path transform="translate(344 321) rotate(-90)" d="M6.5 1.5L5.5 0.5H1.5L0.5 1.5V5.5L1.5 6.5H5.5L6.5 5.5M9.5 0.5H14.5L15.5 1.5V2.5L14.5 3.5H11.5M14.5 3.5L15.5 4.5V5.5L14.5 6.5H9.5"/>
<path transform="translate(378 312) rotate(-90)" d="M6.5 1.5L5.5 0.5H1.5L0.5 1.5V5.5L1.5 6.5H5.5L6.5 5.5M11.5 1.5L12.5 0.5V6.5"/>
<path d="M252.5 420V414.5L257.5 419.5M252.5 422.5H258.5V428.5H252.5"/>
<path transform="translate(552 218) rotate(-90)" d="M0.5 0.5V5.5L1.5 6.5H5.5L6.5 5.5V0.5M14.5 0.5H10.5L9.5 1.5V5.5L10.5 6.5H14.5L15.5 5.5V4.5L14.5 3.5H9.5"/>
<path transform="translate(270 520) rotate(-90)" d="M6.5 0.5V5.5L5.5 6.5H1.5L0.5 5.5V4.5M9.5 0.5H14.5L15.5 1.5V2.5L14.5 3.5H11.5M14.5 3.5L15.5 4.5V5.5L14.5 6.5H9.5"/>
<path transform="translate(556 294) rotate(-90)" d="M0.5 0.5V5.5L1.5 6.5H5.5L6.5 5.5V0.5M9.5 0.5H14.5L15.5 1.5V2.5L14.5 3.5H11.5M14.5 3.5L15.5 4.5V5.5L14.5 6.5H9.5"/>
<path transform="translate(790 296) rotate(-90)" d="M0.5 0.5V5.5L1.5 6.5H5.5L6.5 5.5V0.5M9.5 1.5L10.5 0.5H14.5L15.5 1.5V2.5L14.5 3.5H10.5L9.5 4.5V6.5H15.5"/>
</g>
<g fill="#cc00cc">
<polygon points="384.1,193.0 380.3,196.8 374.9,196.8 371.1,193.0 371.1,187.6 374.9,183.8 380.3,183.8 384.1,187.6"/>
<polygon points="399.9,193.0 396.1,196.8 390.7,196.8 386.9,193.0 386.9,187.6 390.7,183.8 396.1,183.8 399.9,187.6"/>
<polygon points="360.1,248.9 356.3,252.7 350.9,252.7 347.1,248.9 347.1,243.5 350.9,239.7 356.3,239.7 360.1,243.5"/>
<polygon points="376.5,248.9 372.7,252.7 367.3,252.7 363.5,248.9 363.5,243.5 367.3,239.7 372.7,239.7 376.5,243.5"/>
<polygon points="252.3,241.1 249.2,244.2 245.0,244.2 241.9,241.1 241.9,236.9 245.0,233.8 249.2,233.8 252.3,236.9"/>
<polygon points="252.3,258.2 249.2,261.3 245.0,261.3 241.9,258.2 241.9,254.0 245.0,250.9 249.2,250.9 252.3,254.0"/>
<polygon points="249.9,281.6 246.8,284.7 242.6,284.7 239.5,281.6 239.5,277.4 242.6,274.3 246.8,274.3 249.9,277.4"/>
<polygon points="249.9,348.4 246.8,351.5 242.6,351.5 239.5,348.4 239.5,344.2 242.6,341.1 246.8,341.1 249.9,344.2"/>
<polygon points="238.6,293.3 235.5,296.4 231.3,296.4 228.2,293.3 228.2,289.1 231.3,286.0 235.5,286.0 238.6,289.1"/>
<polygon points="238.6,358.8 235.5,361.9 231.3,361.9 228.2,358.8 228.2,354.6 231.3,351.5 235.5,351.5 238.6,354.6"/>
<circle cx="277.6" cy="264.1" r="4.6"/>
<circle cx="327.6" cy="264.1" r="4.6"/>
<circle cx="277.6" cy="280.4" r="4.6"/>
<circle cx="327.6" cy="280.4" r="4.6"/>
<circle cx="277.6" cy="296.8" r="4.6"/>
<circle cx="327.6" cy="296.8" r="4.6"/>
<circle cx="277.6" cy="313.1" r="4.6"/>
<rect x="323.1" y="308.6" width="9" height="9"/>
<polygon points="365.6,306.5 362.5,309.6 358.3,309.6 355.2,306.5 355.2,302.3 358.3,299.2 362.5,299.2 365.6,302.3"/>
<polygon points="365.6,323.1 362.5,326.2 358.3,326.2 355.2,323.1 355.2,318.9 358.3,315.8 362.5,315.8 365.6,318.9"/>
<polygon points="398.8,296.4 395.7,299.5 391.5,299.5 388.4,296.4 388.4,292.2 391.5,289.1 395.7,289.1 398.8,292.2"/>
<polygon points="398.8,313.2 395.7,316.3 391.5,316.3 388.4,313.2 388.4,309.0 391.5,305.9 395.7,305.9 398.8,309.0"/>
<circle cx="428.3" cy="260.4" r="4.6"/>
<circle cx="428.3" cy="310.5" r="4.6"/>
<circle cx="444.87" cy="260.4" r="4.6"/>
<circle cx="444.87" cy="310.5" r="4.6"/>
<circle cx="461.44" cy="260.4" r="4.6"/>
<circle cx="461.44" cy="310.5" r="4.6"/>
<circle cx="478.01" cy="260.4" r="4.6"/>
<circle cx="478.01" cy="310.5" r="4.6"/>
<circle cx="494.58000000000004" cy="260.4" r="4.6"/>
<circle cx="494.58000000000004" cy="310.5" r="4.6"/>
<circle cx="511.15" cy="260.4" r="4.6"/>
<circle cx="511.15" cy="310.5" r="4.6"/>
<circle cx="527.72" cy="260.4" r="4.6"/>
<circle cx="527.72" cy="310.5" r="4.6"/>
<rect x="539.8" y="255.9" width="9" height="9"/>
<circle cx="544.29" cy="310.5" r="4.6"/>
<circle cx="568.5" cy="184.1" r="4.6"/>
<rect x="564.0" y="228.7" width="9" height="9"/>
<circle cx="584.8" cy="184.1" r="4.6"/>
<circle cx="584.8" cy="233.2" r="4.6"/>
<circle cx="601.1" cy="184.1" r="4.6"/>
<circle cx="601.1" cy="233.2" r="4.6"/>
<circle cx="617.4" cy="184.1" r="4.6"/>
<circle cx="617.4" cy="233.2" r="4.6"/>
<circle cx="633.7" cy="184.1" r="4.6"/>
<circle cx="633.7" cy="233.2" r="4.6"/>
<circle cx="650.0" cy="184.1" r="4.6"/>
<circle cx="650.0" cy="233.2" r="4.6"/>
<circle cx="666.3" cy="184.1" r="4.6"/>
<circle cx="666.3" cy="233.2" r="4.6"/>
<polygon points="715.8,198.3 712.0,202.1 706.6,202.1 702.8,198.3 702.8,192.9 706.6,189.1 712.0,189.1 715.8,192.9"/>
<polygon points="732.8,198.3 729.0,202.1 723.6,202.1 719.8,198.3 719.8,192.9 723.6,189.1 729.0,189.1 732.8,192.9"/>
<circle cx="663.0" cy="262.3" r="4.6"/>
<circle cx="663.0" cy="311.4" r="4.6"/>
<circle cx="679.47" cy="262.3" r="4.6"/>
<circle cx="679.47" cy="311.4" r="4.6"/>
<circle cx="695.94" cy="262.3" r="4.6"/>
<circle cx="695.94" cy="311.4" r="4.6"/>
<circle cx="712.41" cy="262.3" r="4.6"/>
<circle cx="712.41" cy="311.4" r="4.6"/>
<circle cx="728.88" cy="262.3" r="4.6"/>
<circle cx="728.88" cy="311.4" r="4.6"/>
<circle cx="745.35" cy="262.3" r="4.6"/>
<circle cx="745.35" cy="311.4" r="4.6"/>
<circle cx="761.8199999999999" cy="262.3" r="4.6"/>
<circle cx="761.8199999999999" cy="311.4" r="4.6"/>
<rect x="773.8" y="257.8" width="9" height="9"/>
<circle cx="778.29" cy="311.4" r="4.6"/>
<rect x="292.8" y="358.3" width="9" height="9"/>
<circle cx="346.3" cy="362.8" r="4.6"/>
<circle cx="297.3" cy="379.1" r="4.6"/>
<circle cx="346.3" cy="379.1" r="4.6"/>
<circle cx="297.3" cy="395.40000000000003" r="4.6"/>
<circle cx="346.3" cy="395.40000000000003" r="4.6"/>
<circle cx="297.3" cy="411.70000000000005" r="4.6"/>
<circle cx="346.3" cy="411.70000000000005" r="4.6"/>
<circle cx="297.3" cy="428.0" r="4.6"/>
<circle cx="346.3" cy="428.0" r="4.6"/>
<circle cx="297.3" cy="444.3" r="4.6"/>
<circle cx="346.3" cy="444.3" r="4.6"/>
<circle cx="297.3" cy="460.6" r="4.6"/>
<circle cx="346.3" cy="460.6" r="4.6"/>
<circle cx="297.3" cy="476.90000000000003" r="4.6"/>
<circle cx="346.3" cy="476.90000000000003" r="4.6"/>
<rect x="226.3" y="396.8" width="13" height="13"/>
<rect x="226.3" y="414.1" width="13" height="13"/>
<rect x="226.3" y="430.2" width="13" height="13"/>
<polygon points="248.4,497.8 244.6,501.6 239.2,501.6 235.4,497.8 235.4,492.4 239.2,488.6 244.6,488.6 248.4,492.4"/>
<polygon points="248.4,514.0 244.6,517.8 239.2,517.8 235.4,514.0 235.4,508.6 239.2,504.8 244.6,504.8 248.4,508.6"/>
<polygon points="248.4,530.7 244.6,534.5 239.2,534.5 235.4,530.7 235.4,525.3 239.2,521.5 244.6,521.5 248.4,525.3"/>
<polygon points="491.9,431.1 488.1,434.9 482.7,434.9 478.9,431.1 478.9,425.7 482.7,421.9 488.1,421.9 491.9,425.7"/>
<polygon points="508.9,431.1 505.1,434.9 499.7,434.9 495.9,431.1 495.9,425.7 499.7,421.9 505.1,421.9 508.9,425.7"/>
<polygon points="739.0,382.2 735.2,386.0 729.8,386.0 726.0,382.2 726.0,376.8 729.8,373.0 735.2,373.0 739.0,376.8"/>
<polygon points="739.0,521.2 735.2,525.0 729.8,525.0 726.0,521.2 726.0,515.8 729.8,512.0 735.2,512.0 739.0,515.8"/>
<polygon points="722.5,382.2 718.7,386.0 713.3,386.0 709.5,382.2 709.5,376.8 713.3,373.0 718.7,373.0 722.5,376.8"/>
<polygon points="722.5,521.2 718.7,525.0 713.3,525.0 709.5,521.2 709.5,515.8 713.3,512.0 718.7,512.0 722.5,515.8"/>
<polygon points="706.0,382.2 702.2,386.0 696.8,386.0 693.0,382.2 693.0,376.8 696.8,373.0 702.2,373.0 706.0,376.8"/>
<polygon points="706.0,521.2 702.2,525.0 696.8,525.0 693.0,521.2 693.0,515.8 696.8,512.0 702.2,512.0 706.0,515.8"/>
<polygon points="689.5,382.2 685.7,386.0 680.3,386.0 676.5,382.2 676.5,376.8 680.3,373.0 685.7,373.0 689.5,376.8"/>
<polygon points="689.5,521.2 685.7,525.0 680.3,525.0 676.5,521.2 676.5,515.8 680.3,512.0 685.7,512.0 689.5,515.8"/>
<polygon points="673.0,382.2 669.2,386.0 663.8,386.0 660.1,382.2 660.1,376.8 663.8,373.0 669.2,373.0 673.0,376.8"/>
<polygon points="673.0,521.2 669.2,525.0 663.8,525.0 660.1,521.2 660.1,515.8 663.8,512.0 669.2,512.0 673.0,515.8"/>
<polygon points="656.5,382.2 652.7,386.0 647.3,386.0 643.6,382.2 643.6,376.8 647.3,373.0 652.7,373.0 656.5,376.8"/>
<polygon points="656.5,521.2 652.7,525.0 647.3,525.0 643.6,521.2 643.6,515.8 647.3,512.0 652.7,512.0 656.5,515.8"/>
<polygon points="640.0,382.2 636.2,386.0 630.9,386.0 627.1,382.2 627.1,376.8 630.9,373.0 636.2,373.0 640.0,376.8"/>
<polygon points="640.0,521.2 636.2,525.0 630.9,525.0 627.1,521.2 627.1,515.8 630.9,512.0 636.2,512.0 640.0,515.8"/>
<polygon points="623.5,382.2 619.7,386.0 614.4,386.0 610.6,382.2 610.6,376.8 614.4,373.0 619.7,373.0 623.5,376.8"/>
<polygon points="623.5,521.2 619.7,525.0 614.4,525.0 610.6,521.2 610.6,515.8 614.4,512.0 619.7,512.0 623.5,515.8"/>
<polygon points="607.0,382.2 603.2,386.0 597.9,386.0 594.1,382.2 594.1,376.8 597.9,373.0 603.2,373.0 607.0,376.8"/>
<polygon points="607.0,521.2 603.2,525.0 597.9,525.0 594.1,521.2 594.1,515.8 597.9,512.0 603.2,512.0 607.0,515.8"/>
<polygon points="590.5,382.2 586.7,386.0 581.4,386.0 577.6,382.2 577.6,376.8 581.4,373.0 586.7,373.0 590.5,376.8"/>
<polygon points="590.5,521.2 586.7,525.0 581.4,525.0 577.6,521.2 577.6,515.8 581.4,512.0 586.7,512.0 590.5,515.8"/>
<polygon points="574.0,382.2 570.2,386.0 564.9,386.0 561.1,382.2 561.1,376.8 564.9,373.0 570.2,373.0 574.0,376.8"/>
<polygon points="574.0,521.2 570.2,525.0 564.9,525.0 561.1,521.2 561.1,515.8 564.9,512.0 570.2,512.0 574.0,515.8"/>
<polygon points="557.5,382.2 553.7,386.0 548.4,386.0 544.6,382.2 544.6,376.8 548.4,373.0 553.7,373.0 557.5,376.8"/>
<polygon points="557.5,521.2 553.7,525.0 548.4,525.0 544.6,521.2 544.6,515.8 548.4,512.0 553.7,512.0 557.5,515.8"/>
<polygon points="541.0,382.2 537.2,386.0 531.9,386.0 528.1,382.2 528.1,376.8 531.9,373.0 537.2,373.0 541.0,376.8"/>
<polygon points="541.0,521.2 537.2,525.0 531.9,525.0 528.1,521.2 528.1,515.8 531.9,512.0 537.2,512.0 541.0,515.8"/>
<polygon points="524.5,382.2 520.7,386.0 515.4,386.0 511.6,382.2 511.6,376.8 515.4,373.0 520.7,373.0 524.5,376.8"/>
<polygon points="524.5,521.2 520.7,525.0 515.4,525.0 511.6,521.2 511.6,515.8 515.4,512.0 520.7,512.0 524.5,515.8"/>
<polygon points="508.0,382.2 504.2,386.0 498.9,386.0 495.1,382.2 495.1,376.8 498.9,373.0 504.2,373.0 508.0,376.8"/>
<polygon points="508.0,521.2 504.2,525.0 498.9,525.0 495.1,521.2 495.1,515.8 498.9,512.0 504.2,512.0 508.0,515.8"/>
<polygon points="491.5,382.2 487.8,386.0 482.4,386.0 478.6,382.2 478.6,376.8 482.4,373.0 487.8,373.0 491.5,376.8"/>
<polygon points="491.5,521.2 487.8,525.0 482.4,525.0 478.6,521.2 478.6,515.8 482.4,512.0 487.8,512.0 491.5,515.8"/>
<polygon points="475.0,382.2 471.3,386.0 465.9,386.0 462.1,382.2 462.1,376.8 465.9,373.0 471.3,373.0 475.0,376.8"/>
<polygon points="475.0,521.2 471.3,525.0 465.9,525.0 462.1,521.2 462.1,515.8 465.9,512.0 471.3,512.0 475.0,515.8"/>
<polygon points="458.6,382.2 454.8,386.0 449.4,386.0 445.6,382.2 445.6,376.8 449.4,373.0 454.8,373.0 458.6,376.8"/>
<polygon points="458.6,521.2 454.8,525.0 449.4,525.0 445.6,521.2 445.6,515.8 449.4,512.0 454.8,512.0 458.6,515.8"/>
<polygon points="442.1,382.2 438.3,386.0 432.9,386.0 429.1,382.2 429.1,376.8 432.9,373.0 438.3,373.0 442.1,376.8"/>
<polygon points="442.1,521.2 438.3,525.0 432.9,525.0 429.1,521.2 429.1,515.8 432.9,512.0 438.3,512.0 442.1,515.8"/>
<polygon points="425.6,382.2 421.8,386.0 416.4,386.0 412.6,382.2 412.6,376.8 416.4,373.0 421.8,373.0 425.6,376.8"/>
<polygon points="425.6,521.2 421.8,525.0 416.4,525.0 412.6,521.2 412.6,515.8 416.4,512.0 421.8,512.0 425.6,515.8"/>
<circle cx="809.2" cy="345.9" r="4.6"/>
<circle cx="858.4" cy="345.9" r="4.6"/>
<circle cx="809.2" cy="362.21" r="4.6"/>
<circle cx="858.4" cy="362.21" r="4.6"/>
<circle cx="809.2" cy="378.52" r="4.6"/>
<circle cx="858.4" cy="378.52" r="4.6"/>
<circle cx="809.2" cy="394.83" r="4.6"/>
<circle cx="858.4" cy="394.83" r="4.6"/>
<circle cx="809.2" cy="411.14" r="4.6"/>
<circle cx="858.4" cy="411.14" r="4.6"/>
<circle cx="809.2" cy="427.45" r="4.6"/>
<circle cx="858.4" cy="427.45" r="4.6"/>
<circle cx="809.2" cy="443.76" r="4.6"/>
<circle cx="858.4" cy="443.76" r="4.6"/>
<circle cx="809.2" cy="460.06999999999994" r="4.6"/>
<rect x="853.9" y="455.6" width="9" height="9"/>
</g>
<g fill="#8a8a8a">
<circle cx="377.6" cy="190.3" r="3.4"/>
<circle cx="393.4" cy="190.3" r="3.4"/>
<circle cx="353.6" cy="246.2" r="3.4"/>
<circle cx="370.0" cy="246.2" r="3.4"/>
<circle cx="247.1" cy="239.0" r="2.8"/>
<circle cx="247.1" cy="256.1" r="2.8"/>
<circle cx="244.7" cy="279.5" r="2.8"/>
<circle cx="244.7" cy="346.3" r="2.8"/>
<circle cx="233.4" cy="291.2" r="2.8"/>
<circle cx="233.4" cy="356.7" r="2.8"/>
<circle cx="277.6" cy="264.1" r="2.5"/>
<circle cx="327.6" cy="264.1" r="2.5"/>
<circle cx="277.6" cy="280.4" r="2.5"/>
<circle cx="327.6" cy="280.4" r="2.5"/>
<circle cx="277.6" cy="296.8" r="2.5"/>
<circle cx="327.6" cy="296.8" r="2.5"/>
<circle cx="277.6" cy="313.1" r="2.5"/>
<circle cx="327.6" cy="313.1" r="2.5"/>
<circle cx="360.4" cy="304.4" r="2.8"/>
<circle cx="360.4" cy="321.0" r="2.8"/>
<circle cx="393.6" cy="294.3" r="2.8"/>
<circle cx="393.6" cy="311.1" r="2.8"/>
<circle cx="428.3" cy="260.4" r="2.5"/>
<circle cx="428.3" cy="310.5" r="2.5"/>
<circle cx="444.87" cy="260.4" r="2.5"/>
<circle cx="444.87" cy="310.5" r="2.5"/>
<circle cx="461.44" cy="260.4" r="2.5"/>
<circle cx="461.44" cy="310.5" r="2.5"/>
<circle cx="478.01" cy="260.4" r="2.5"/>
<circle cx="478.01" cy="310.5" r="2.5"/>
<circle cx="494.58000000000004" cy="260.4" r="2.5"/>
<circle cx="494.58000000000004" cy="310.5" r="2.5"/>
<circle cx="511.15" cy="260.4" r="2.5"/>
<circle cx="511.15" cy="310.5" r="2.5"/>
<circle cx="527.72" cy="260.4" r="2.5"/>
<circle cx="527.72" cy="310.5" r="2.5"/>
<circle cx="544.29" cy="260.4" r="2.5"/>
<circle cx="544.29" cy="310.5" r="2.5"/>
<circle cx="568.5" cy="184.1" r="2.5"/>
<circle cx="568.5" cy="233.2" r="2.5"/>
<circle cx="584.8" cy="184.1" r="2.5"/>
<circle cx="584.8" cy="233.2" r="2.5"/>
<circle cx="601.1" cy="184.1" r="2.5"/>
<circle cx="601.1" cy="233.2" r="2.5"/>
<circle cx="617.4" cy="184.1" r="2.5"/>
<circle cx="617.4" cy="233.2" r="2.5"/>
<circle cx="633.7" cy="184.1" r="2.5"/>
<circle cx="633.7" cy="233.2" r="2.5"/>
<circle cx="650.0" cy="184.1" r="2.5"/>
<circle cx="650.0" cy="233.2" r="2.5"/>
<circle cx="666.3" cy="184.1" r="2.5"/>
<circle cx="666.3" cy="233.2" r="2.5"/>
<circle cx="709.3" cy="195.6" r="3.4"/>
<circle cx="726.3" cy="195.6" r="3.4"/>
<circle cx="663.0" cy="262.3" r="2.5"/>
<circle cx="663.0" cy="311.4" r="2.5"/>
<circle cx="679.47" cy="262.3" r="2.5"/>
<circle cx="679.47" cy="311.4" r="2.5"/>
<circle cx="695.94" cy="262.3" r="2.5"/>
<circle cx="695.94" cy="311.4" r="2.5"/>
<circle cx="712.41" cy="262.3" r="2.5"/>
<circle cx="712.41" cy="311.4" r="2.5"/>
<circle cx="728.88" cy="262.3" r="2.5"/>
<circle cx="728.88" cy="311.4" r="2.5"/>
<circle cx="745.35" cy="262.3" r="2.5"/>
<circle cx="745.35" cy="311.4" r="2.5"/>
<circle cx="761.8199999999999" cy="262.3" r="2.5"/>
<circle cx="761.8199999999999" cy="311.4" r="2.5"/>
<circle cx="778.29" cy="262.3" r="2.5"/>
<circle cx="778.29" cy="311.4" r="2.5"/>
<circle cx="297.3" cy="362.8" r="2.5"/>
<circle cx="346.3" cy="362.8" r="2.5"/>
<circle cx="297.3" cy="379.1" r="2.5"/>
<circle cx="346.3" cy="379.1" r="2.5"/>
<circle cx="297.3" cy="395.40000000000003" r="2.5"/>
<circle cx="346.3" cy="395.40000000000003" r="2.5"/>
<circle cx="297.3" cy="411.70000000000005" r="2.5"/>
<circle cx="346.3" cy="411.70000000000005" r="2.5"/>
<circle cx="297.3" cy="428.0" r="2.5"/>
<circle cx="346.3" cy="428.0" r="2.5"/>
<circle cx="297.3" cy="444.3" r="2.5"/>
<circle cx="346.3" cy="444.3" r="2.5"/>
<circle cx="297.3" cy="460.6" r="2.5"/>
<circle cx="346.3" cy="460.6" r="2.5"/>
<circle cx="297.3" cy="476.90000000000003" r="2.5"/>
<circle cx="346.3" cy="476.90000000000003" r="2.5"/>
<circle cx="232.8" cy="403.3" r="3.4"/>
<circle cx="232.8" cy="420.6" r="3.4"/>
<circle cx="232.8" cy="436.7" r="3.4"/>
<circle cx="241.9" cy="495.1" r="3.4"/>
<circle cx="241.9" cy="511.3" r="3.4"/>
<circle cx="241.9" cy="528.0" r="3.4"/>
<circle cx="485.4" cy="428.4" r="3.4"/>
<circle cx="502.4" cy="428.4" r="3.4"/>
<circle cx="732.5" cy="379.5" r="3.4"/>
<circle cx="732.5" cy="518.5" r="3.4"/>
<circle cx="716.005" cy="379.5" r="3.4"/>
<circle cx="716.005" cy="518.5" r="3.4"/>
<circle cx="699.51" cy="379.5" r="3.4"/>
<circle cx="699.51" cy="518.5" r="3.4"/>
<circle cx="683.015" cy="379.5" r="3.4"/>
<circle cx="683.015" cy="518.5" r="3.4"/>
<circle cx="666.52" cy="379.5" r="3.4"/>
<circle cx="666.52" cy="518.5" r="3.4"/>
<circle cx="650.025" cy="379.5" r="3.4"/>
<circle cx="650.025" cy="518.5" r="3.4"/>
<circle cx="633.53" cy="379.5" r="3.4"/>
<circle cx="633.53" cy="518.5" r="3.4"/>
<circle cx="617.035" cy="379.5" r="3.4"/>
<circle cx="617.035" cy="518.5" r="3.4"/>
<circle cx="600.54" cy="379.5" r="3.4"/>
<circle cx="600.54" cy="518.5" r="3.4"/>
<circle cx="584.045" cy="379.5" r="3.4"/>
<circle cx="584.045" cy="518.5" r="3.4"/>
<circle cx="567.55" cy="379.5" r="3.4"/>
<circle cx="567.55" cy="518.5" r="3.4"/>
<circle cx="551.055" cy="379.5" r="3.4"/>
<circle cx="551.055" cy="518.5" r="3.4"/>
<circle cx="534.56" cy="379.5" r="3.4"/>
<circle cx="534.56" cy="518.5" r="3.4"/>
<circle cx="518.065" cy="379.5" r="3.4"/>
<circle cx="518.065" cy="518.5" r="3.4"/>
<circle cx="501.57" cy="379.5" r="3.4"/>
<circle cx="501.57" cy="518.5" r="3.4"/>
<circle cx="485.075" cy="379.5" r="3.4"/>
<circle cx="485.075" cy="518.5" r="3.4"/>
<circle cx="468.58" cy="379.5" r="3.4"/>
<circle cx="468.58" cy="518.5" r="3.4"/>
<circle cx="452.085" cy="379.5" r="3.4"/>
<circle cx="452.085" cy="518.5" r="3.4"/>
<circle cx="435.59" cy="379.5" r="3.4"/>
<circle cx="435.59" cy="518.5" r="3.4"/>
<circle cx="419.09499999999997" cy="379.5" r="3.4"/>
<circle cx="419.09499999999997" cy="518.5" r="3.4"/>
<circle cx="809.2" cy="345.9" r="2.5"/>
<circle cx="858.4" cy="345.9" r="2.5"/>
<circle cx="809.2" cy="362.21" r="2.5"/>
<circle cx="858.4" cy="362.21" r="2.5"/>
<circle cx="809.2" cy="378.52" r="2.5"/>
<circle cx="858.4" cy="378.52" r="2.5"/>
<circle cx="809.2" cy="394.83" r="2.5"/>
<circle cx="858.4" cy="394.83" r="2.5"/>
<circle cx="809.2" cy="411.14" r="2.5"/>
<circle cx="858.4" cy="411.14" r="2.5"/>
<circle cx="809.2" cy="427.45" r="2.5"/>
<circle cx="858.4" cy="427.45" r="2.5"/>
<circle cx="809.2" cy="443.76" r="2.5"/>
<circle cx="858.4" cy="443.76" r="2.5"/>
<circle cx="809.2" cy="460.06999999999994" r="2.5"/>
<circle cx="858.4" cy="460.06999999999994" r="2.5"/>
</g>
<g fill="none" stroke="#e0ffff" stroke-width="1">
<path d="M377.5 188.5L378.5 187.5V193.5"/>
<path d="M391.5 188.5L392.5 187.5H394.5L395.5 188.5V189.5L391.5 193.5H395.5"/>
<path d="M353.5 244.5L354.5 243.5V249.5"/>
<path d="M368.5 244.5L369.5 243.5H371.5L372.5 244.5V245.5L368.5 249.5H372.5"/>
<path d="M245.5 237.5L246.5 236.5H248.5L249.5 237.5V238.5L245.5 242.5H249.5"/>
<path d="M246.5 254.5L247.5 253.5V259.5"/>
<path d="M244.5 278.5L245.5 277.5V283.5"/>
<path d="M243.5 344.5L244.5 343.5H246.5L247.5 344.5V345.5L243.5 349.5H247.5"/>
<path d="M232.5 289.5L233.5 288.5V294.5"/>
<path d="M231.5 355.5L232.5 354.5H234.5L235.5 355.5V356.5L231.5 360.5H235.5"/>
<path d="M358.5 302.5L359.5 301.5H361.5L362.5 302.5V303.5L358.5 307.5H362.5"/>
<path d="M359.5 319.5L360.5 318.5V324.5"/>
<path d="M392.5 292.5L393.5 291.5H395.5L396.5 292.5V293.5L392.5 297.5H396.5"/>
<path d="M393.5 309.5L394.5 308.5V314.5"/>
<path d="M707.5 194.5L708.5 193.5H710.5L711.5 194.5V195.5L707.5 199.5H711.5"/>
<path d="M725.5 194.5L726.5 193.5V199.5"/>
<path d="M232.5 401.5L233.5 400.5V406.5"/>
<path d="M231.5 419.5L232.5 418.5H234.5L235.5 419.5V420.5L231.5 424.5H235.5"/>
<path d="M231.5 434.5H234.5L235.5 435.5V436.5L234.5 437.5H232.5M234.5 437.5L235.5 438.5V439.5L234.5 440.5H231.5"/>
<path d="M241.5 493.5L242.5 492.5V498.5"/>
<path d="M240.5 509.5L241.5 508.5H243.5L244.5 509.5V510.5L240.5 514.5H244.5"/>
<path d="M240.5 525.5H243.5L244.5 526.5V527.5L243.5 528.5H241.5M243.5 528.5L244.5 529.5V530.5L243.5 531.5H240.5"/>
<path d="M484.5 426.5L485.5 425.5V431.5"/>
<path d="M500.5 426.5L501.5 425.5H503.5L504.5 426.5V427.5L500.5 431.5H504.5"/>
<path d="M731.5 378.5L732.5 377.5V383.5"/>
<path d="M731.5 516.5L732.5 515.5V521.5"/>
<path d="M714.5 378.5L715.5 377.5H717.5L718.5 378.5V379.5L714.5 383.5H718.5"/>
<path d="M714.5 516.5L715.5 515.5H717.5L718.5 516.5V517.5L714.5 521.5H718.5"/>
<path d="M698.5 377.5H701.5L702.5 378.5V379.5L701.5 380.5H699.5M701.5 380.5L702.5 381.5V382.5L701.5 383.5H698.5"/>
<path d="M698.5 515.5H701.5L702.5 516.5V517.5L701.5 518.5H699.5M701.5 518.5L702.5 519.5V520.5L701.5 521.5H698.5"/>
<path d="M684.5 383.5V377.5L681.5 381.5H685.5"/>
<path d="M684.5 521.5V515.5L681.5 519.5H685.5"/>
<path d="M669.5 377.5H665.5V380.5H668.5L669.5 381.5V382.5L668.5 383.5H665.5"/>
<path d="M669.5 515.5H665.5V518.5H668.5L669.5 519.5V520.5L668.5 521.5H665.5"/>
<path d="M651.5 377.5H649.5L648.5 378.5V382.5L649.5 383.5H651.5L652.5 382.5V381.5L651.5 380.5H648.5"/>
<path d="M651.5 515.5H649.5L648.5 516.5V520.5L649.5 521.5H651.5L652.5 520.5V519.5L651.5 518.5H648.5"/>
<path d="M632.5 377.5H636.5L633.5 383.5"/>
<path d="M632.5 515.5H636.5L633.5 521.5"/>
<path d="M616.5 377.5H618.5L619.5 378.5V379.5L618.5 380.5H616.5L615.5 381.5V382.5L616.5 383.5H618.5L619.5 382.5V381.5L618.5 380.5H616.5L615.5 379.5V378.5L616.5 377.5"/>
<path d="M616.5 515.5H618.5L619.5 516.5V517.5L618.5 518.5H616.5L615.5 519.5V520.5L616.5 521.5H618.5L619.5 520.5V519.5L618.5 518.5H616.5L615.5 517.5V516.5L616.5 515.5"/>
<path d="M603.5 380.5H600.5L599.5 379.5V378.5L600.5 377.5H602.5L603.5 378.5V382.5L602.5 383.5H600.5"/>
<path d="M603.5 518.5H600.5L599.5 517.5V516.5L600.5 515.5H602.5L603.5 516.5V520.5L602.5 521.5H600.5"/>
<path d="M579.5 378.5L580.5 377.5V383.5M585.5 377.5H587.5L588.5 378.5V382.5L587.5 383.5H585.5L584.5 382.5V378.5L585.5 377.5"/>
<path d="M579.5 516.5L580.5 515.5V521.5M585.5 515.5H587.5L588.5 516.5V520.5L587.5 521.5H585.5L584.5 520.5V516.5L585.5 515.5"/>
<path d="M563.5 378.5L564.5 377.5V383.5M569.5 378.5L570.5 377.5V383.5"/>
<path d="M563.5 516.5L564.5 515.5V521.5M569.5 516.5L570.5 515.5V521.5"/>
<path d="M546.5 378.5L547.5 377.5V383.5M551.5 378.5L552.5 377.5H554.5L555.5 378.5V379.5L551.5 383.5H555.5"/>
<path d="M546.5 516.5L547.5 515.5V521.5M551.5 516.5L552.5 515.5H554.5L555.5 516.5V517.5L551.5 521.5H555.5"/>
<path d="M530.5 378.5L531.5 377.5V383.5M535.5 377.5H538.5L539.5 378.5V379.5L538.5 380.5H536.5M538.5 380.5L539.5 381.5V382.5L538.5 383.5H535.5"/>
<path d="M530.5 516.5L531.5 515.5V521.5M535.5 515.5H538.5L539.5 516.5V517.5L538.5 518.5H536.5M538.5 518.5L539.5 519.5V520.5L538.5 521.5H535.5"/>
<path d="M513.5 378.5L514.5 377.5V383.5M521.5 383.5V377.5L518.5 381.5H522.5"/>
<path d="M513.5 516.5L514.5 515.5V521.5M521.5 521.5V515.5L518.5 519.5H522.5"/>
<path d="M497.5 378.5L498.5 377.5V383.5M506.5 377.5H502.5V380.5H505.5L506.5 381.5V382.5L505.5 383.5H502.5"/>
<path d="M497.5 516.5L498.5 515.5V521.5M506.5 515.5H502.5V518.5H505.5L506.5 519.5V520.5L505.5 521.5H502.5"/>
<path d="M480.5 378.5L481.5 377.5V383.5M488.5 377.5H486.5L485.5 378.5V382.5L486.5 383.5H488.5L489.5 382.5V381.5L488.5 380.5H485.5"/>
<path d="M480.5 516.5L481.5 515.5V521.5M488.5 515.5H486.5L485.5 516.5V520.5L486.5 521.5H488.5L489.5 520.5V519.5L488.5 518.5H485.5"/>
<path d="M464.5 378.5L465.5 377.5V383.5M469.5 377.5H473.5L470.5 383.5"/>
<path d="M464.5 516.5L465.5 515.5V521.5M469.5 515.5H473.5L470.5 521.5"/>
<path d="M447.5 378.5L448.5 377.5V383.5M453.5 377.5H455.5L456.5 378.5V379.5L455.5 380.5H453.5L452.5 381.5V382.5L453.5 383.5H455.5L456.5 382.5V381.5L455.5 380.5H453.5L452.5 379.5V378.5L453.5 377.5"/>
<path d="M447.5 516.5L448.5 515.5V521.5M453.5 515.5H455.5L456.5 516.5V517.5L455.5 518.5H453.5L452.5 519.5V520.5L453.5 521.5H455.5L456.5 520.5V519.5L455.5 518.5H453.5L452.5 517.5V516.5L453.5 515.5"/>
<path d="M431.5 378.5L432.5 377.5V383.5M440.5 380.5H437.5L436.5 379.5V378.5L437.5 377.5H439.5L440.5 378.5V382.5L439.5 383.5H437.5"/>
<path d="M431.5 516.5L432.5 515.5V521.5M440.5 518.5H437.5L436.5 517.5V516.5L437.5 515.5H439.5L440.5 516.5V520.5L439.5 521.5H437.5"/>
<path d="M413.5 378.5L414.5 377.5H416.5L417.5 378.5V379.5L413.5 383.5H417.5M420.5 377.5H422.5L423.5 378.5V382.5L422.5 383.5H420.5L419.5 382.5V378.5L420.5 377.5"/>
<path d="M413.5 516.5L414.5 515.5H416.5L417.5 516.5V517.5L413.5 521.5H417.5M420.5 515.5H422.5L423.5 516.5V520.5L422.5 521.5H420.5L419.5 520.5V516.5L420.5 515.5"/>
</g>
<g stroke="#00ff00" stroke-width="1" fill="none">
<path d="M247.1 239.0L277.6 264.1M247.1 256.1L244.7 279.5M244.7 279.5L277.6 280.4M277.6 280.4L327.6 296.8M233.4 291.2L277.6 296.8M233.4 291.2L244.7 346.3M233.4 356.7L327.6 264.1M233.4 356.7L297.3 395.4M327.6 313.1L360.4 321.0M360.4 321.0L393.6 311.1M327.6 313.1L297.3 379.1M327.6 296.8L377.6 190.3M370.0 246.2L360.4 304.4M393.4 190.3L393.6 294.3M428.3 260.4L393.6 311.1M393.6 311.1L452.1 379.5M327.6 280.4L778.3 262.3M444.9 260.4L584.8 184.1M568.5 184.1L511.1 260.4M461.4 260.4L584.8 233.2M544.3 260.4L712.4 262.3M601.1 184.1L527.7 310.5M568.5 184.1L745.4 262.3M568.5 233.2L461.4 310.5M461.4 310.5L584.0 379.5M444.9 310.5L518.1 518.5M428.3 310.5L600.5 379.5M494.6 310.5L633.5 379.5M478.0 310.5L501.6 518.5M444.9 260.4L567.5 518.5M527.7 260.4L511.1 310.5M511.1 310.5L534.6 379.5M527.7 310.5L502.4 428.4M461.4 260.4L551.1 518.5M511.1 260.4L584.0 379.5M232.8 403.3L241.9 495.1M232.8 420.6L297.3 379.1M232.8 436.7L346.3 362.8M232.8 420.6L297.3 476.9M241.9 528.0L297.3 476.9M297.3 379.1L346.3 395.4M297.3 428.0L858.4 460.1M346.3 476.9L518.1 379.5M346.3 362.8L485.4 428.4M297.3 362.8L502.4 428.4M346.3 411.7L809.2 345.9M346.3 428.0L584.0 518.5M346.3 444.3L501.6 379.5M297.3 444.3L633.5 518.5M297.3 460.6L650.0 518.5M346.3 460.6L600.5 518.5M709.3 195.6L666.3 233.2M666.3 233.2L663.0 262.3M726.3 195.6L761.8 262.3M601.1 184.1L761.8 311.4M663.0 262.3L745.4 311.4M745.4 262.3L858.4 427.4M679.5 262.3L485.1 518.5M695.9 262.3L468.6 518.5M663.0 311.4L683.0 379.5M679.5 311.4L435.6 518.5M695.9 311.4L666.5 379.5M728.9 311.4L716.0 379.5M745.4 311.4L699.5 379.5M712.4 311.4L419.1 518.5M745.4 311.4L858.4 345.9M761.8 311.4L809.2 443.8M534.6 379.5L534.6 518.5M452.1 379.5L699.5 379.5M419.1 379.5L809.2 411.1M452.1 518.5L699.5 518.5M732.5 379.5L809.2 378.5M858.4 345.9L809.2 427.4M809.2 362.2L683.0 518.5M809.2 394.8L666.5 518.5M858.4 362.2L732.5 518.5M858.4 378.5L716.0 518.5M809.2 427.4L858.4 443.8M858.4 427.4L809.2 460.1"/>
</g>
<g fill="none" stroke="#ffff00" stroke-width="1">
<path d="M385.5 190.3L373.5 270.3M373.5 270.3L381.9 258.4L369.0 256.5Z"/>
<path d="M362.0 246.2L354.9 264.4M354.9 264.4L365.7 254.7L353.6 249.9Z"/>
<path d="M247.5 248.0L261.3 272.0M261.3 272.0L260.5 257.5L249.2 264.0Z"/>
<path d="M244.6 312.6L251.9 276.3M251.9 276.3L243.0 287.8L255.7 290.3Z"/>
<path d="M233.0 324.2L274.4 338.8M274.4 338.8L264.3 328.3L260.0 340.6Z"/>
<path d="M302.6 288.6L342.7 296.8M342.7 296.8L331.3 287.8L328.7 300.6Z"/>
<path d="M360.4 313.9L363.1 290.7M363.1 290.7L355.1 302.9L368.1 304.4Z"/>
<path d="M392.9 303.9L408.1 288.6M408.1 288.6L394.3 293.2L403.5 302.4Z"/>
<path d="M617.5 209.4L587.5 270.1M587.5 270.1L599.1 261.3L587.4 255.6Z"/>
<path d="M717.3 195.0L714.2 247.4M714.2 247.4L721.5 234.8L708.5 234.0Z"/>
<path d="M486.3 285.1L562.9 353.1M562.9 353.1L557.5 339.6L548.9 349.3Z"/>
<path d="M720.6 286.9L621.0 362.5M621.0 362.5L635.3 359.8L627.4 349.5Z"/>
<path d="M322.5 418.8L462.4 437.1M462.4 437.1L450.4 429.0L448.7 441.9Z"/>
<path d="M232.5 420.8L283.4 436.3M283.4 436.3L272.9 426.3L269.1 438.7Z"/>
<path d="M242.0 511.3L265.5 440.7M265.5 440.7L255.2 451.0L267.6 455.1Z"/>
<path d="M494.0 428.4L447.9 358.3M447.9 358.3L449.6 372.7L460.5 365.6Z"/>
<path d="M833.8 403.0L609.4 415.2M609.4 415.2L622.7 421.0L622.0 408.0Z"/>
<path d="M576.4 518.5L574.5 351.1M574.5 351.1L568.1 364.2L581.1 364.0Z"/>
<path d="M576.0 380.0L565.0 362.0M565.0 362.0L566.2 376.5L577.3 369.7Z"/>
</g>
</svg>
<svg class="a" style="left:0;top:0" width="1023" height="723" viewBox="0 0 1023 723">
<path d="M3.5 46V68H1.5" stroke="#fff" fill="none"/><path d="M4.5 46V69H2" stroke="#a0a0a0" fill="none"/>
<path d="M12.5 50.5H21L24.5 54V64.5H12.5Z" fill="#f4f6f8" stroke="#505050"/>
<path d="M32.5 52.5H38L40 54H46V62.5H32.5Z" fill="#e8d878" stroke="#8a7030"/><path d="M33 62.5L36 56.5H48L45 62.5Z" fill="#f4e890" stroke="#8a7030"/><path d="M41 51Q44 47 47 50" stroke="#1060b0" fill="none" stroke-width="1.5"/>
<rect x="53.5" y="49.5" width="15" height="15" fill="#6a6ad0" stroke="#4848a0"/><rect x="56" y="50" width="10" height="6" fill="#d8e4f0"/><rect x="57" y="59" width="8" height="5" fill="#e8e8f0"/>
<path d="M75.5 48V65" stroke="#a0a0a0"/><path d="M76.5 48V65" stroke="#fff"/>
<rect x="90.5" y="49.5" width="9" height="11" fill="#e8e8e8" stroke="#707070"/><path d="M93 54h1M96 54h1M93 57h1M96 57h1" stroke="#d04020"/><rect x="82.5" y="55.5" width="10" height="9" fill="#6a6ad0" stroke="#4848a0"/><rect x="84.5" y="56" width="6" height="3" fill="#d8e4f0"/><path d="M85 53Q89 49 93 52" stroke="#1060b0" fill="none" stroke-width="1.5"/>
<rect x="103.5" y="49.5" width="9" height="11" fill="#e8e8e8" stroke="#707070"/><path d="M105 54h1M108 54h1M105 57h1M108 57h1" stroke="#d04020"/><rect x="109.5" y="55.5" width="10" height="9" fill="#6a6ad0" stroke="#4848a0"/><rect x="111.5" y="56" width="6" height="3" fill="#d8e4f0"/><path d="M106 53Q111 48 116 52" stroke="#1060b0" fill="none" stroke-width="1.5"/>
<path d="M125.5 48V65" stroke="#a0a0a0"/><path d="M126.5 48V65" stroke="#fff"/>
<rect x="138.5" y="49.5" width="7" height="5" fill="#f0f4f8" stroke="#6080a0"/><rect x="132.5" y="54.5" width="16" height="7" rx="2" fill="#b8c0c8" stroke="#606870"/><rect x="138.5" y="60.5" width="7" height="5" fill="#f0f4f8" stroke="#6080a0"/><path d="M142 55v4M140 57h4" stroke="#10c010" stroke-width="1.5"/>
<path d="M155.5 50.5H163L166.5 54V64.5H155.5Z" fill="#e8ecf0" stroke="#606060"/><rect x="158" y="55" width="6" height="7" fill="#9098a0"/>
<path d="M175.5 48V65" stroke="#a0a0a0"/><path d="M176.5 48V65" stroke="#fff"/>
<path d="M187 51V55H198V51M192 55V64M187 55V63M183 58H187M198 55V63" stroke="#4a8a30" fill="none" stroke-width="1.2"/><path d="M186 50h2v2h-2zM197 50h2v2h-2zM183 62h2v2h-2zM191 63h2v2h-2zM197 63h2v2h-2z" fill="#3a7a20"/>
<path d="M214 60L219 65" stroke="#606060" stroke-width="3"/>
<circle cx="210" cy="56" r="5.5" fill="#c8dce8" stroke="#5a6068" stroke-width="1.5"/>
<path d="M210 51V61M205 56H215" stroke="#5a9a40" stroke-width="2"/>
<path d="M217 50h2v2h-2zM207 63h2v2h-2z" fill="#3a7a20"/>
<path d="M226.5 44V71" stroke="#a0a0a0"/><path d="M227.5 44V71" stroke="#fff"/>
<path d="M232.5 46V69H230.5" stroke="#fff" fill="none"/><path d="M233.5 46V70H231" stroke="#a0a0a0" fill="none"/>
<path d="M241.5 50.5H250L253.5 54V64.5H241.5Z" fill="#e8ecf0" stroke="#606060"/><path d="M244 58Q245 53 250 54M251 59Q250 63 245 62" stroke="#20a020" fill="none" stroke-width="1.6"/>
<path d="M261.5 64.5L268.5 54V64.5Z" fill="#fff" stroke="#303030"/><path d="M271 54L277 64.5H271Z" fill="#e85020" stroke="#a03010"/><text x="268" y="53" font-size="7" font-family="Liberation Sans" fill="#202020">F</text>
<rect x="280.5" y="47.5" width="20" height="20" fill="#f8f8f8" stroke="#c8c8c8"/>
<path d="M284 51h1M288 51h1M292 51h1M296 51h1M284 55h1M288 55h1M292 55h1M296 55h1M284 59h1M288 59h1M292 59h1M296 59h1M284 63h1M288 63h1M292 63h1M296 63h1" stroke="#404040" stroke-width="1.5"/>
<rect x="303.5" y="51.5" width="8" height="11" fill="#d05030" stroke="#803020"/><rect x="308.5" y="53.5" width="6" height="11" fill="#7080d0" stroke="#404080"/><rect x="313.5" y="55.5" width="5" height="9" fill="#e8d040" stroke="#806820"/>
<path d="M325.5 48V66" stroke="#a0a0a0"/><path d="M326.5 48V66" stroke="#fff"/>
<rect x="330.5" y="47.5" width="20" height="20" fill="#f8f8f8" stroke="#c8c8c8"/>
<text x="332" y="64" font-size="20" font-weight="bold" font-family="Liberation Sans" fill="#000" textLength="17" lengthAdjust="spacingAndGlyphs">m</text>
<path d="M362.5 50V65M355 57.5H370" stroke="#202020"/><rect x="359.5" y="54.5" width="6" height="6" fill="#d0c840" stroke="#606020"/>
<path d="M376.5 49V64.5H390" stroke="#202020" fill="none"/><path d="M377 64L389 51" stroke="#e04020"/><text x="378" y="55" font-size="7" font-family="Liberation Sans" fill="#202020">z</text>
<path d="M396.5 48V66" stroke="#a0a0a0"/><path d="M397.5 48V66" stroke="#fff"/>
<path d="M410.5 49V66M402 57.5H419" stroke="#1060c0" stroke-width="2.2"/><path d="M410.5 48L407 52H414ZM410.5 67L407 63H414ZM401 57.5L405 54V61ZM420 57.5L416 54V61Z" fill="#1060c0"/>
<path d="M434 59L439 64" stroke="#606060" stroke-width="3"/>
<circle cx="430" cy="55" r="5.5" fill="#c8dce8" stroke="#5a6068" stroke-width="1.5"/>
<path d="M430 52V58M427 55H433" stroke="#404040" stroke-width="1.5"/>
<path d="M455 59L460 64" stroke="#606060" stroke-width="3"/>
<circle cx="451" cy="55" r="5.5" fill="#c8dce8" stroke="#5a6068" stroke-width="1.5"/>
<path d="M448 55H454" stroke="#404040" stroke-width="1.5"/>
<path d="M476 59L481 64" stroke="#606060" stroke-width="3"/>
<circle cx="472" cy="55" r="5.5" fill="#c8dce8" stroke="#5a6068" stroke-width="1.5"/>
<rect x="469.5" y="52.5" width="5" height="5" fill="#909090" stroke="#505050"/>
<rect x="487.5" y="53.5" width="9" height="11" fill="none" stroke="#303030" stroke-dasharray="1 1"/>
<path d="M498 58L503 63" stroke="#606060" stroke-width="3"/>
<circle cx="494" cy="54" r="5.5" fill="#c8dce8" stroke="#5a6068" stroke-width="1.5"/>
<path d="M511.5 44V71" stroke="#a0a0a0"/><path d="M512.5 44V71" stroke="#fff"/>
<path d="M516.5 46V69H514.5" stroke="#fff" fill="none"/><path d="M517.5 46V70H515" stroke="#a0a0a0" fill="none"/>
<path d="M529 56Q532 50 537 54Q539 60 532 64" stroke="#2060c0" stroke-width="2.4" fill="none"/><path d="M525 51L526 58L531 55Z" fill="#2060c0"/>
<path d="M556 56Q553 50 548 54Q546 60 553 64" stroke="#a0a0a0" stroke-width="2.4" fill="none"/><path d="M560 51L559 58L554 55Z" fill="#a0a0a0"/>
<path d="M567.5 48V66" stroke="#a0a0a0"/><path d="M568.5 48V66" stroke="#fff"/>
<path d="M574 49H590V54H585V57H590V65H574V57H579V54H574Z" fill="#a0a0a0"/>
<path d="M595 49H611V55H605V57H611V65H595V57H600V55H595Z" fill="#a0a0a0"/><rect x="597" y="51" width="12" height="3" fill="#f0f0f0"/>
<rect x="616" y="49" width="16" height="16" fill="#a0a0a0"/><rect x="637" y="49" width="16" height="16" fill="#a0a0a0"/>
<path d="M659.5 48V66" stroke="#a0a0a0"/><path d="M660.5 48V66" stroke="#fff"/>
<path d="M677 59L682 64" stroke="#606060" stroke-width="3"/>
<circle cx="673" cy="55" r="5.5" fill="#c8dce8" stroke="#5a6068" stroke-width="1.5"/>
<path d="M671 52L676 55L671 58Z" fill="#d8d040" stroke="#808020"/>
<path d="M688 50H697V52H699V64H688Z" fill="#a0a0a0"/><path d="M686 53h2M686 56h2M686 59h2M686 62h2" stroke="#a0a0a0"/>
<path d="M709 65L718 54" stroke="#a0a0a0" stroke-width="3"/><path d="M714 51L719 49L724 55L721 57Z" fill="#a0a0a0"/>
<path d="M731.5 44V71" stroke="#a0a0a0"/><path d="M732.5 44V71" stroke="#fff"/>
<path d="M737.5 46V69H735.5" stroke="#fff" fill="none"/><path d="M738.5 46V70H736" stroke="#a0a0a0" fill="none"/>
<rect x="742.5" y="47.5" width="20" height="20" fill="#f8f8f8" stroke="#c8c8c8"/>
<path d="M746.5 50V65.5H762" stroke="#202020" fill="none"/><path d="M747 51Q760 51 760 65" stroke="#3050a0" fill="none"/><rect x="749.5" y="57.5" width="7" height="6" fill="#d8d040" stroke="#707020"/><path d="M751 57.5V55.5Q753 53 755 55.5V57.5" stroke="#707020" fill="none"/>
<rect x="764.5" y="47.5" width="20" height="20" fill="#f8f8f8" stroke="#c8c8c8"/>
<rect x="767.5" y="51.5" width="14" height="7" fill="none" stroke="#202020" stroke-dasharray="1.5 1"/><path d="M769 55H780" stroke="#e04020" stroke-width="2"/><path d="M778 57L778 66L780 64L782 67L783 66L781 63L784 63Z" fill="#101010"/>
<rect x="795" y="49" width="5" height="16" fill="#e05020"/><circle cx="792" cy="57" r="2" fill="#e8e040" stroke="#606020" stroke-width=".5"/><circle cx="803" cy="57" r="2" fill="#e8e040" stroke="#606020" stroke-width=".5"/>
<path d="M810.5 48V66" stroke="#a0a0a0"/><path d="M811.5 48V66" stroke="#fff"/>
<rect x="818" y="53" width="6" height="11" rx="2" fill="#90a0b0" stroke="#505a60"/><rect x="826" y="53" width="6" height="11" rx="2" fill="#90a0b0" stroke="#505a60"/><rect x="819" y="50" width="4" height="4" fill="#707a80"/><rect x="827" y="50" width="4" height="4" fill="#707a80"/>
<text x="838" y="54" font-size="6.5" font-weight="bold" font-family="Liberation Sans" fill="#202020">U1</text><text x="838" y="60" font-size="6.5" font-weight="bold" font-family="Liberation Sans" fill="#202020">U2</text><text x="838" y="66" font-size="6.5" font-weight="bold" font-family="Liberation Sans" fill="#202020">U3</text>
<path d="M858.5 48V66" stroke="#a0a0a0"/><path d="M859.5 48V66" stroke="#fff"/>
<path d="M866 51H870L877 63H882M866 55H870L876 59H882M866 59H870L876 55H882M866 63H870L877 51H882" stroke="#40a030" stroke-width="2" fill="none"/><path d="M866 55H870L876 59H882" stroke="#e05020" stroke-width="2" fill="none"/><path d="M866 51H870L877 63H882" stroke="#e8d040" stroke-width="2" fill="none"/>
<path d="M887.5 48V66" stroke="#a0a0a0"/><path d="M888.5 48V66" stroke="#fff"/>
<path d="M900 49V66" stroke="#303030"/><path d="M900 50L895 57L900 64" stroke="#e8d070" fill="none"/><path d="M900 50L903 55M900 64L903 59" stroke="#2050c0"/><path d="M908 50V55M905 53L908 56L911 53M908 65V60M905 62L908 59L911 62" stroke="#101010" fill="none"/>
<path d="M915.5 49.5L915.5 61.5L927 61.5Z" fill="#60c0c0" stroke="#306060"/><path d="M922 58L930 50" stroke="#e06020" stroke-width="3"/><rect x="915" y="63" width="17" height="3" fill="#e06030"/>
<path d="M2 73.5H24" stroke="#fff"/><path d="M2 74.5H25V72" stroke="#a0a0a0" fill="none"/>
<path d="M8 83V97L11 94L14 99L16 98L13 93H17Z" fill="#383838"/>
<path d="M8.5 106V119L18 112.5Z" fill="#d8d870" stroke="#707030"/><path d="M4 109H8M4 116H8M18 112.5H21" stroke="#707030"/>
<rect x="7.5" y="127.5" width="9" height="14" fill="#d8d060" stroke="#707030"/><path d="M5 130h2M5 133h2M5 136h2M5 139h2M17 130h2M17 133h2M17 136h2M17 139h2" stroke="#707030"/>
<path d="M7 152V157H17V163" stroke="#2040b0" stroke-width="2" fill="none"/><circle cx="7" cy="151" r="2.2" fill="#f0e040" stroke="#707020" stroke-width=".6"/><circle cx="17" cy="162.5" r="2.2" fill="#f0e040" stroke="#707020" stroke-width=".6"/>
<path d="M5 174.5H15" stroke="#2040b0" stroke-width="2"/><path d="M16.5 177V186" stroke="#e04020" stroke-width="2"/><circle cx="16.5" cy="174.5" r="3" fill="#f0e040" stroke="#707020" stroke-width=".6"/>
<rect x="2.5" y="190.5" width="19" height="20" fill="#f8f8f8" stroke="#c8c8c8"/>
<path d="M6.5 194.5H19.5V199.5H15.5V208.5H10.5V199.5H6.5Z" fill="#d8d060" stroke="#606020"/>
<path d="M6 217L18 229M6 229L18 217M12 216V230M5 223H19" stroke="#305a20" stroke-width="1.2"/><path d="M5 216h2v2h-2zM17 216h2v2h-2zM5 228h2v2h-2zM17 228h2v2h-2zM11 215h2v2h-2zM11 229h2v2h-2z" fill="#e0e040"/>
<path d="M8 240V251M17 240V251M8 245.5H17" stroke="#2040a0" stroke-width="2"/><circle cx="8" cy="239" r="1.8" fill="#f0e040"/><circle cx="17" cy="239" r="1.8" fill="#f0e040"/><circle cx="8" cy="251" r="1.8" fill="#f0e040"/><circle cx="17" cy="251" r="1.8" fill="#f0e040"/>
<path d="M4 257.5H25" stroke="#a0a0a0"/>
<circle cx="12" cy="271" r="8" fill="#9040a0"/><circle cx="12" cy="271" r="1.6" fill="#fff"/>
<rect x="5" y="286" width="14" height="14" fill="#9040a0"/><circle cx="12" cy="293" r="1.6" fill="#fff"/>
<rect x="7" y="307" width="10" height="16" rx="5" fill="#9040a0"/><circle cx="12" cy="315" r="1.6" fill="#fff"/>
<path d="M7 345V334Q7 329 12.5 329Q18 329 18 334V345Z" fill="#d04a20"/>
<circle cx="12" cy="358.6" r="8" fill="#d04a20"/>
<rect x="6" y="373" width="12" height="16" fill="#d04a20"/>
<path d="M5 411V399H12V395H19V411Z" fill="#d04a20"/>
<ellipse cx="12" cy="428.5" rx="7" ry="3" fill="#4a80d0"/><ellipse cx="12" cy="424.5" rx="7" ry="3" fill="#50b040"/><ellipse cx="12" cy="420.5" rx="7" ry="3" fill="#f06040"/>
<path d="M4 437.5H25" stroke="#a0a0a0"/>
<path d="M4.5 458.5L20 443" stroke="#303030" stroke-width="1.5"/>
<rect x="5.5" y="466.5" width="13" height="13" fill="#60b0b0" stroke="#303838"/>
<circle cx="12" cy="494.5" r="7.5" fill="#5aa8a8" stroke="#303838"/>
<path d="M5.5 523.5V511.5H11Q18 513 18 523.5Z" fill="none" stroke="#1050c0" stroke-dasharray="1.2 1"/><path d="M5.5 511.5H11Q18 513 18 523.5" fill="none" stroke="#202020"/>
<ellipse cx="9" cy="538.5" rx="5" ry="6.5" fill="#5aa8a8" stroke="#305050" stroke-width=".6"/><ellipse cx="16" cy="538.5" rx="4.5" ry="6" fill="#5aa8a8" stroke="#305050" stroke-width=".6"/>
<text x="4" y="568" font-size="17" font-weight="bold" font-family="Liberation Serif" fill="#202020">A</text>
<rect x="5.5" y="576.5" width="13" height="13" fill="#60b0b0" stroke="#202020"/><text x="7" y="588" font-size="12" font-weight="bold" font-family="Liberation Sans" fill="#101010">S</text>
<path d="M11.5 597V612M4 604.5H19" stroke="#202020"/><rect x="9" y="602" width="5" height="5" fill="#50a0a0"/>
<path d="M5 634L19 620" stroke="#202020" stroke-width="1.6"/><path d="M4 635L5 629L10 634ZM20 619L19 625L14 620Z" fill="#202020"/>
<path d="M0 677.5H150" stroke="#f0f0f0"/>
<path d="M4.5 682V705H2.5" stroke="#fff" fill="none"/><path d="M5.5 682V706H3" stroke="#a0a0a0" fill="none"/>
<path d="M24 690Q21 686 17.5 687Q12 689 13 694Q14.5 699 19.5 698.5Q22 698 23.5 695" stroke="#2048a8" stroke-width="2.4" fill="none"/><path d="M26 686V692H20Z" fill="#2048a8"/>
<path d="M35 690Q38 686 41.5 687Q47 689 46 694Q44.5 699 39.5 698.5Q37 698 35.5 695" stroke="#2048a8" stroke-width="2.4" fill="none"/><path d="M33 686V692H39Z" fill="#2048a8"/>
<path d="M83.5 684V702" stroke="#a0a0a0"/><path d="M84.5 684V702" stroke="#fff"/>
<path d="M89 692.5L94 688V697ZM105 692.5L100 688V697Z" fill="#4070c0"/><path d="M93 692.5H101" stroke="#4070c0" stroke-width="2.5"/><path d="M100 688V697L105 692.5Z" fill="#1a3a90"/>
<path d="M117 685L112 690H122ZM117 701L112 696H122Z" fill="#6090d0"/><path d="M117 689V697" stroke="#4070c0" stroke-width="2.5"/><path d="M117 685L112 690H122Z" fill="#1a3a90"/>
<path d="M134.5 679V706" stroke="#a0a0a0"/><path d="M135.5 679V706" stroke="#fff"/>
<path d="M139.5 682V705H137.5" stroke="#fff" fill="none"/><path d="M140.5 682V706H138" stroke="#a0a0a0" fill="none"/>
<path d="M282.5 679V706" stroke="#a0a0a0"/><path d="M283.5 679V706" stroke="#fff"/>
<path d="M288.5 682V705H286.5" stroke="#fff" fill="none"/><path d="M289.5 682V706H287" stroke="#a0a0a0" fill="none"/>
<path d="M295 697L303 693L311 697L303 701Z" fill="#40a030" stroke="#286020" stroke-width=".6"/><path d="M295 692.5L303 688.5L311 692.5L303 696.5Z" fill="#50b040" stroke="#286020" stroke-width=".6"/><path d="M295 688L303 684L311 688L303 692Z" fill="#60c050" stroke="#286020" stroke-width=".6"/>
<path d="M317.5 684V702" stroke="#a0a0a0"/><path d="M318.5 684V702" stroke="#fff"/>
<path d="M328.5 687.5V697.5L336 692.5Z" fill="none" stroke="#606060" stroke-width="1.2"/><path d="M323 690H328M323 695H328M336 692.5H340" stroke="#606060"/>
<circle cx="348.5" cy="689" r="3.5" fill="#808080"/><rect x="355" y="693" width="7" height="7" fill="#808080"/>
<circle cx="374.5" cy="692.5" r="8" fill="#909090"/><circle cx="374.5" cy="692.5" r="2" fill="#f0f0f0"/>
<path d="M390 689V693H398V698" stroke="#707070" stroke-width="1.6" fill="none"/><circle cx="390" cy="687.5" r="2.3" fill="#f0f0f0" stroke="#707070"/><circle cx="399" cy="699" r="2.3" fill="#f0f0f0" stroke="#707070"/>
<path d="M416 686V700M410 686H422M410 700H422" stroke="#808080" stroke-width="1.2"/>
<rect x="427.5" y="682.5" width="20" height="21" fill="#f8f8f8" stroke="#c8c8c8"/>
<path d="M431.5 686.5H445.5V691.5H441V701.5H436V691.5H431.5Z" fill="#40a030" stroke="#205a18"/>
<path d="M451 686L466 700M451 700L466 686M458.5 685V701M450 693H467" stroke="#707070" stroke-width="1.2"/>
<path d="M472.5 684V702" stroke="#a0a0a0"/><path d="M473.5 684V702" stroke="#fff"/>
<path d="M480 687h1M483 687h1M486 687h1M480 690h1M486 690h1" stroke="#a0b0c0"/><path d="M484 689V696H492V699" stroke="#b0b0b0" fill="none" stroke-width="1.5"/><rect x="491" y="698" width="3" height="3" fill="#b0b0b0"/>
<path d="M502.5 679V706" stroke="#a0a0a0"/><path d="M503.5 679V706" stroke="#fff"/>
<path d="M508.5 682V705H506.5" stroke="#fff" fill="none"/><path d="M509.5 682V706H507" stroke="#a0a0a0" fill="none"/>
<path d="M112.5 710V723" stroke="#a0a0a0"/><path d="M113.5 710V723" stroke="#fff"/><path d="M117.5 710V723" stroke="#a0a0a0"/><path d="M118.5 710V723" stroke="#fff"/>
<path d="M0 707.5H1023" stroke="#a0a0a0"/><path d="M0 708.5H1023" stroke="#fff"/>
</svg>
<div class="a" style="left:53px;top:684px;width:27px;height:17px;background:#fff;border:1px solid;border-color:#202020 #e0e0e0 #e0e0e0 #202020;font-size:12px;line-height:15px;padding-left:1px">0°</div>
<div class="a" style="left:145px;top:683px;width:131px;height:21px;background:#fff;border:1px solid;border-color:#808080 #fff #fff #808080;box-shadow:inset 1px 1px 0 #404040"></div>
<div class="a" style="left:149px;top:686px;width:18px;height:14px;background:#c00000;border:1px solid #000"></div>
<div class="a" style="left:169px;top:686px;font-size:10.7px;line-height:14px">Top Copper</div>
<div class="a" style="left:259px;top:685px;width:16px;height:17px;background:#f0f0f0;border:1px solid;border-color:#fff #404040 #404040 #fff"></div>
<div class="a" style="left:263px;top:692px;width:0;height:0;border-left:4px solid transparent;border-right:4px solid transparent;border-top:4px solid #000"></div>
<div class="a sunk" style="left:513px;top:685px;width:506px;height:17px;background:#f0f0f0;font-size:11px;line-height:15px;padding-left:2px;white-space:nowrap">C:\Users\Administrator\Dropbox\Project\schematic\stop watch - Copy.LYT</div>
<div class="a sunk" style="left:29px;top:711px;width:79px;height:14px;font-size:10.5px;line-height:13px;padding-left:2px;white-space:nowrap">No DRC errors</div>
<div class="a sunk" style="left:122px;top:711px;width:897px;height:14px"></div>
<svg class="a" style="left:8px;top:711px" width="17" height="12"><path d="M1.5 6L6 10.5L15.5 1" stroke="#10d010" stroke-width="3.2" fill="none"/></svg>
</body></html>
